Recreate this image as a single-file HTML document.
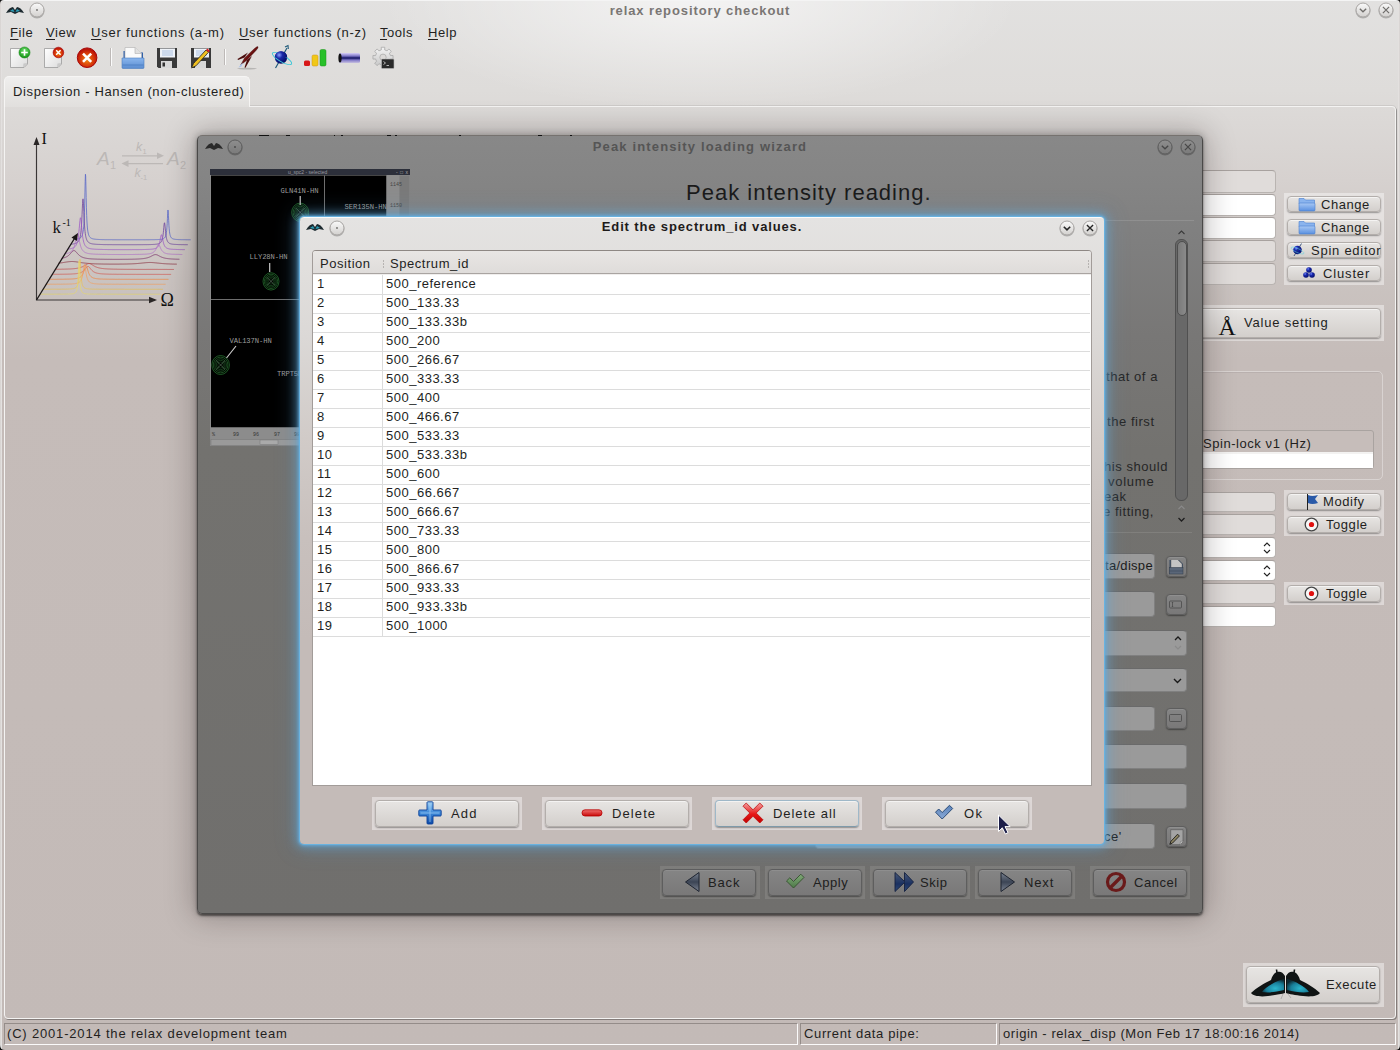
<!DOCTYPE html>
<html><head><meta charset="utf-8">
<style>
*{box-sizing:border-box;margin:0;padding:0}
html,body{width:1400px;height:1050px;overflow:hidden}
body{position:relative;font-family:"Liberation Sans",sans-serif;font-size:13px;letter-spacing:0.55px;color:#231f1e;
background:radial-gradient(ellipse 320px 110px at 700px 0px,rgba(255,255,255,0.6),rgba(255,255,255,0) 100%),linear-gradient(180deg,#e2e1e0 0px,#dedcda 90px,#d6d1cf 180px,#cac3c0 280px,#c5bcb9 360px,#c3bab7 1050px);}
.a{position:absolute}
.t{position:absolute;white-space:nowrap;line-height:15px}
.u{text-decoration:underline;text-underline-offset:2px}
.menu{top:25px}
#tab{left:4px;top:76px;width:246px;height:31px;border:1px solid #f6f5f4;border-bottom:none;border-radius:5px 5px 0 0;
background:linear-gradient(180deg,#efeeed,#e1dfdd)}
#panel{left:4px;top:106px;width:1392px;height:913px;border:1px solid #f4f3f2;border-radius:0 4px 4px 4px;
box-shadow:0 -1px 0 rgba(0,0,0,0.07),1px 1px 0 rgba(0,0,0,0.33)}
.sb{top:1023px;height:22px;border:1px solid #fbfafa;border-top-color:#948c89;border-left-color:#948c89}
.btnbox{position:absolute;background:rgba(255,255,255,0.42)}
.btn{position:absolute;border-radius:4px;border:1px solid #b3aeab;background:linear-gradient(180deg,#e7e5e3,#d3cfcc);
box-shadow:0 1px 1.5px rgba(0,0,0,0.35), inset 0 1px 0 #f4f3f2}
.fld{position:absolute;border-radius:4px;border:1px solid #b9b4b1;border-top-color:#a8a29f;background:#e0dcda}
.fldw{position:absolute;border-radius:4px;border:1px solid #b9b4b1;border-top-color:#a8a29f;background:linear-gradient(90deg,#dcdcdc,#ffffff 40px)}
.circ{position:absolute;border-radius:50%;background:radial-gradient(circle at 50% 30%,#f5f5f5,#d8d6d4 60%,#b0acaa);box-shadow:0 1px 1px rgba(0,0,0,0.35)}
.cell{letter-spacing:0.5px}
/* wizard */
#wiz{left:197px;top:135px;width:1006px;height:779px;border:1px solid #4a4948;border-top-color:#76726f;border-radius:5px;
background:linear-gradient(180deg,#888888 0px,#848484 50px,#7f7f7f 105px,#787776 200px,#73726f 315px,#706f6d 779px);
box-shadow:0 2px 2px rgba(0,0,0,0.5),0 0 6px 1px rgba(0,0,0,0.2),0 0 30px 3px rgba(20,10,10,0.28)}
.wfld{position:absolute;border-radius:4px;border:1px solid #808080;border-top-color:#6a6a6a;background:#9a9a9a}
.wbtnbox{position:absolute;background:rgba(255,255,255,0.1)}
.wbtn{position:absolute;border-radius:4px;border:1px solid #5e5e5e;background:linear-gradient(180deg,#858585,#797878);
box-shadow:0 1px 1.5px rgba(0,0,0,0.4), inset 0 1px 0 #8f8f8f}
.wcirc{position:absolute;border-radius:50%;background:radial-gradient(circle at 50% 30%,#9a9a9a,#858585 60%,#6a6a6a);box-shadow:0 1px 1px rgba(0,0,0,0.35)}
/* dialog */
#dlg{left:300px;top:217px;width:804px;height:627px;border-radius:4px;border-top:1px solid #fbfbfb;
background:linear-gradient(180deg,#e4e3e2 0px,#e1dfdd 50px,#dbd8d6 120px,#d1cbc8 220px,#c8c0bd 320px,#c4bbb8 420px,#c4bbb8 627px);
box-shadow:0 0 0 1px rgba(105,180,225,0.9),0 0 3px 2px rgba(100,175,225,0.75),0 0 10px 4px rgba(95,168,215,0.5),0 0 20px 6px rgba(90,160,210,0.25)}

</style></head><body>
<!-- Title bar -->
<div class="a" style="left:0;top:0;width:2px;height:1050px;background:linear-gradient(90deg,#d4d0ce,#e8e6e5)"></div>
<div class="a" style="left:1398px;top:0;width:2px;height:1050px;background:linear-gradient(90deg,#e8e6e5,#d4d0ce)"></div>
<div class="a" style="left:0;top:0;width:1400px;height:1px;background:#f4f4f4"></div>
<svg class="a" style="left:0;top:0" width="1400" height="1050" viewBox="0 0 1400 1050"><path d="M0 0 H4 Q0 0 0 4 Z M1400 0 H1396 Q1400 0 1400 4 Z M0 1050 V1045 Q0 1050 5 1050 Z M1400 1050 V1045 Q1400 1050 1395 1050 Z" fill="#111"/></svg>
<div class="t" style="left:0;top:3px;width:1400px;text-align:center;color:#7a7674;font-weight:bold;letter-spacing:0.9px">relax repository checkout</div>
<svg class="a" style="left:5px;top:5px" width="20" height="10" viewBox="0 0 20 10"><path d="M1 8 C3 4 6 2 8 2 L10 5 L12 2 C14 2 17 4 19 8 L14 7 L10 9 L6 7 Z" fill="#1d2a30"/><path d="M5 6 L8 4 L9.5 7Z M15 6 L12 4 L10.5 7Z" fill="#2a9fb8"/></svg>
<svg class="a" style="left:26.5px;top:0.0px" width="20" height="20" viewBox="0 0 20 20"><defs><linearGradient id="wb36_10" x1="0" y1="0" x2="0" y2="1"><stop offset="0" stop-color="#fafafa"/><stop offset="1" stop-color="#d2d0ce"/></linearGradient></defs><circle cx="10" cy="10.9" r="7.5" fill="#000" opacity="0.22"/><circle cx="10" cy="10" r="7" fill="url(#wb36_10)" stroke="#a9a6a4" stroke-width="1"/><circle cx="10" cy="10" r="0.9" fill="#6e6c6a"/></svg>
<svg class="a" style="left:1352.5px;top:0.0px" width="20" height="20" viewBox="0 0 20 20"><defs><linearGradient id="wb1362_10" x1="0" y1="0" x2="0" y2="1"><stop offset="0" stop-color="#fafafa"/><stop offset="1" stop-color="#d2d0ce"/></linearGradient></defs><circle cx="10" cy="10.9" r="7.5" fill="#000" opacity="0.22"/><circle cx="10" cy="10" r="7" fill="url(#wb1362_10)" stroke="#a9a6a4" stroke-width="1"/><path d="M6.8 8.7 L10 11.8 L13.2 8.7" fill="none" stroke="#6e6c6a" stroke-width="1.3"/></svg>
<svg class="a" style="left:1375.5px;top:0.0px" width="20" height="20" viewBox="0 0 20 20"><defs><linearGradient id="wb1385_10" x1="0" y1="0" x2="0" y2="1"><stop offset="0" stop-color="#fafafa"/><stop offset="1" stop-color="#d2d0ce"/></linearGradient></defs><circle cx="10" cy="10.9" r="7.5" fill="#000" opacity="0.22"/><circle cx="10" cy="10" r="7" fill="url(#wb1385_10)" stroke="#a9a6a4" stroke-width="1"/><path d="M6.9 6.9 L13.1 13.1 M13.1 6.9 L6.9 13.1" fill="none" stroke="#6e6c6a" stroke-width="1.2"/></svg>

<!-- Menu -->
<div class="t menu" style="left:10px"><span class="u">F</span>ile</div>
<div class="t menu" style="left:46px"><span class="u">V</span>iew</div>
<div class="t menu" style="left:91px;letter-spacing:0.8px"><span class="u">U</span>ser functions (a-m)</div>
<div class="t menu" style="left:239px;letter-spacing:0.72px"><span class="u">U</span>ser functions (n-z)</div>
<div class="t menu" style="left:380px"><span class="u">T</span>ools</div>
<div class="t menu" style="left:428px"><span class="u">H</span>elp</div>

<!-- Toolbar -->
<svg class="a" style="left:0;top:40px" width="420" height="36" viewBox="0 40 420 36">
<defs>
<linearGradient id="pg" x1="0" y1="0" x2="1" y2="1"><stop offset="0" stop-color="#ffffff"/><stop offset="1" stop-color="#dcdcdc"/></linearGradient>
<radialGradient id="gr" cx="0.5" cy="0.35" r="0.6"><stop offset="0" stop-color="#6fe06f"/><stop offset="1" stop-color="#1a9a1a"/></radialGradient>
<radialGradient id="rd" cx="0.5" cy="0.6" r="0.6"><stop offset="0" stop-color="#f08a10"/><stop offset="0.55" stop-color="#d83a0a"/><stop offset="1" stop-color="#b00808"/></radialGradient>
<radialGradient id="bl" cx="0.35" cy="0.3" r="0.75"><stop offset="0" stop-color="#8aa0ff"/><stop offset="0.35" stop-color="#1a2aa8"/><stop offset="1" stop-color="#000a60"/></radialGradient>
<linearGradient id="cyl" x1="0" y1="0" x2="0" y2="1"><stop offset="0" stop-color="#d8d0f8"/><stop offset="0.3" stop-color="#7f78c8"/><stop offset="0.5" stop-color="#101060"/><stop offset="0.7" stop-color="#7f78c8"/><stop offset="1" stop-color="#c8c0e0"/></linearGradient>
<linearGradient id="fold" x1="0" y1="0" x2="0" y2="1"><stop offset="0" stop-color="#8ab6ee"/><stop offset="1" stop-color="#5a8cd0"/></linearGradient>
</defs>
<!-- new doc + -->
<path d="M10.5 48.5 H24 L27.5 52 V64 L24 67.5 H10.5 Z" fill="url(#pg)" stroke="#9a9a9a" stroke-width="0.8"/>
<path d="M23 67.5 L27.5 63 L23.5 63.5 Z" fill="#c8c8c8"/>
<circle cx="24.5" cy="52.5" r="5.5" fill="url(#gr)" stroke="#138813" stroke-width="0.6"/>
<path d="M24.5 49.2 V55.8 M21.2 52.5 H27.8" stroke="#fff" stroke-width="1.6"/>
<!-- close doc x -->
<path d="M44.5 48.5 H58 L61.5 52 V64 L58 67.5 H44.5 Z" fill="url(#pg)" stroke="#9a9a9a" stroke-width="0.8"/>
<path d="M57 67.5 L61.5 63 L57.5 63.5 Z" fill="#c8c8c8"/>
<circle cx="58.4" cy="52.5" r="5.3" fill="url(#rd)" stroke="#a00" stroke-width="0.6"/>
<path d="M56.2 50.3 L60.6 54.7 M60.6 50.3 L56.2 54.7" stroke="#fff" stroke-width="1.5"/>
<!-- big red X -->
<circle cx="87.1" cy="57.7" r="9.8" fill="url(#rd)" stroke="#a80606" stroke-width="1"/>
<path d="M83 53.6 L91.2 61.8 M91.2 53.6 L83 61.8" stroke="#fff" stroke-width="2.6"/>
<!-- separators -->
<path d="M110.5 48 V66" stroke="#bdb9b7" stroke-width="1"/><path d="M111.5 48 V66" stroke="#fbfbfb" stroke-width="1"/>
<path d="M224.5 49 V65" stroke="#bdb9b7" stroke-width="1"/><path d="M225.5 49 V65" stroke="#fbfbfb" stroke-width="1"/>
<!-- open folder -->
<path d="M123.5 51 H130 L132 52.5 H143 V58 H123.5 Z" fill="#2f5fa8"/>
<path d="M125 47.5 H135 L141.5 53.5 V59 H125 Z" fill="#fafafa" stroke="#b8b8b8" stroke-width="0.7"/>
<path d="M135 47.5 V53.5 H141.5" fill="#e0e0e0" stroke="#b0b0b0" stroke-width="0.6"/>
<path d="M122 58 H144 V67.5 Q144 68.5 143 68.5 H123 Q122 68.5 122 67.5 Z" fill="url(#fold)" stroke="#4a7cc0" stroke-width="0.6"/>
<path d="M122.5 65 H143.5" stroke="#4a7cc0" stroke-width="0.8"/>
<!-- floppy -->
<path d="M157 48 H177 V68 H158.5 L157 66.5 Z" fill="#3a3a3a"/>
<rect x="160" y="48.5" width="15" height="9" fill="#eef2f8"/>
<path d="M162 51 H173 M162 53 H173 M162 55 H173" stroke="#8fb0d8" stroke-width="0.7"/>
<rect x="161" y="61" width="11" height="7" fill="#d8d8d8"/><rect x="162.5" y="62.5" width="2.5" height="4" fill="#333"/>
<!-- floppy + pencil -->
<path d="M191 48 H211 V68 H192.5 L191 66.5 Z" fill="#3a3a3a"/>
<rect x="194" y="48.5" width="15" height="9" fill="#eef2f8"/>
<path d="M196 51 H207 M196 53 H207 M196 55 H207" stroke="#8fb0d8" stroke-width="0.7"/>
<rect x="195" y="61" width="11" height="7" fill="#d8d8d8"/>
<path d="M191.5 68 L193.5 63.5 L206 50 L208.5 52.3 L196 65.8 Z" fill="#f0c020" stroke="#222" stroke-width="0.8"/>
<path d="M206 50 L207.5 48.6 L210 51 L208.5 52.3 Z" fill="#d82020"/>
<!-- rocket -->
<defs><linearGradient id="rockg" x1="0" y1="0" x2="1" y2="1"><stop offset="0" stop-color="#c05050"/><stop offset="0.5" stop-color="#6a1010"/><stop offset="1" stop-color="#2a0808"/></linearGradient></defs>
<path d="M241 64.5 L244.5 58 L254.5 48.5 Q257.5 46 258 46.8 Q258.6 47.6 256 50.5 L246.5 60.5 L240.5 65 Z" fill="url(#rockg)" stroke="#3a0a0a" stroke-width="0.4"/>
<path d="M244.5 57.5 L238 60 L237.5 59 L248 52.5 Z" fill="#4a0c0c"/>
<path d="M247 60 L244.5 67.5 L245.5 67.8 L252 56 Z" fill="#4a0c0c"/>
<path d="M240.5 65 L238.5 67.5 L241.5 66.5 L243 62.5 Z" fill="#a8c0f0"/>
<ellipse cx="247" cy="68.6" rx="10" ry="0.9" fill="#000" opacity="0.18"/>
<!-- spin -->
<path d="M275.5 68 L287 48" stroke="#1e5a7a" stroke-width="1.2"/>
<path d="M285 47 L288 45.5 L288.3 49" fill="none" stroke="#1e5a7a" stroke-width="1.1"/>
<circle cx="281" cy="57.5" r="6.2" fill="url(#bl)"/>
<ellipse cx="282" cy="58.5" rx="11" ry="3.2" transform="rotate(30 282 58.5)" fill="none" stroke="#40c8d8" stroke-width="0.9"/>
<circle cx="281" cy="57.5" r="6.2" fill="url(#bl)" clip-path="inset(0 0 50% 0)"/>
<!-- bars -->
<rect x="304" y="60.5" width="6" height="5.5" rx="1.5" fill="#d81818"/>
<rect x="312" y="55" width="6" height="11" rx="1.5" fill="#f0c818" stroke="#d09010" stroke-width="0.5"/>
<rect x="320" y="49.5" width="6" height="16.5" rx="1.5" fill="#28c028" stroke="#189018" stroke-width="0.5"/>
<!-- cylinder -->
<rect x="339" y="53" width="21" height="10" rx="1.5" fill="url(#cyl)"/>
<ellipse cx="340" cy="58" rx="1.6" ry="4.6" fill="#111"/>
<!-- gear terminal -->
<defs><linearGradient id="gearg" x1="0" y1="0" x2="0" y2="1"><stop offset="0" stop-color="#f4f4f4"/><stop offset="1" stop-color="#c4c4c4"/></linearGradient></defs>
<path d="M390.37 55.45 L390.42 55.64 L393.04 55.51 L393.04 59.09 L390.42 58.96 L389.52 61.20 L389.42 61.37 L391.36 63.14 L388.84 65.66 L387.07 63.72 L384.85 64.67 L384.66 64.72 L384.79 67.34 L381.21 67.34 L381.34 64.72 L379.10 63.82 L378.93 63.72 L377.16 65.66 L374.64 63.14 L376.58 61.37 L375.63 59.15 L375.58 58.96 L372.96 59.09 L372.96 55.51 L375.58 55.64 L376.48 53.40 L376.58 53.23 L374.64 51.46 L377.16 48.94 L378.93 50.88 L381.15 49.93 L381.34 49.88 L381.21 47.26 L384.79 47.26 L384.66 49.88 L386.90 50.78 L387.07 50.88 L388.84 48.94 L391.36 51.46 L389.42 53.23 Z" fill="url(#gearg)" stroke="#a8a8a8" stroke-width="0.8"/>
<circle cx="383" cy="57.3" r="3.2" fill="#dcdad8" stroke="#a8a8a8" stroke-width="0.7"/>
<rect x="381.5" y="59" width="12.5" height="9.5" rx="0.8" fill="#2a2a2a" stroke="#bbb" stroke-width="0.6"/>
<path d="M383.5 61.5 L385.5 63 L383.5 64.5 M386.5 65.5 H389" stroke="#eee" stroke-width="0.7" fill="none"/>
</svg>


<!-- Tab + panel -->
<div class="a" id="panel"></div>
<div class="a" id="tab"></div>
<div class="t" style="left:13px;top:84px;letter-spacing:0.65px">Dispersion - Hansen (non-clustered)</div>

<svg class="a" style="left:0;top:0" width="200" height="320" viewBox="0 0 200 320">
<polyline fill="none" stroke="#5565c8" stroke-width="0.95" stroke-opacity="0.8" points="73.93,239.40 74.18,239.38 74.43,239.36 74.68,239.34 74.93,239.32 75.18,239.30 75.43,239.27 75.68,239.25 75.93,239.22 76.18,239.19 76.43,239.15 76.68,239.12 76.93,239.08 77.18,239.03 77.43,238.99 77.68,238.94 77.93,238.88 78.18,238.82 78.43,238.75 78.68,238.67 78.93,238.58 79.18,238.49 79.43,238.38 79.68,238.26 79.93,238.12 80.18,237.96 80.43,237.78 80.68,237.58 80.93,237.34 81.18,237.06 81.43,236.73 81.68,236.33 81.93,235.86 82.18,235.29 82.43,234.59 82.68,233.71 82.93,232.61 83.18,231.19 83.43,229.34 83.68,226.87 83.93,223.53 84.18,218.94 84.43,212.57 84.68,203.89 84.93,192.88 85.18,181.37 85.43,174.24 85.68,176.23 85.93,185.88 86.18,197.60 86.43,207.74 86.68,215.42 86.93,221.00 87.18,225.02 87.43,227.97 87.68,230.16 87.93,231.81 88.18,233.09 88.43,234.09 88.68,234.89 88.93,235.54 89.18,236.06 89.43,236.50 89.68,236.87 89.93,237.18 90.18,237.44 90.43,237.66 90.68,237.86 90.93,238.03 91.18,238.18 91.43,238.31 91.68,238.42 91.93,238.53 92.18,238.62 92.43,238.70 92.68,238.77 92.93,238.84 93.18,238.90 93.43,238.96 93.68,239.01 93.93,239.05 94.18,239.09 94.43,239.13 94.68,239.17 94.93,239.20 95.18,239.23 95.43,239.26 95.68,239.28 95.93,239.31 96.18,239.33 96.43,239.35 96.68,239.37 96.93,239.39 97.18,239.41 97.43,239.42 97.68,239.44 97.93,239.45 98.18,239.46 98.43,239.48 98.68,239.49 98.93,239.50 99.18,239.51 99.43,239.52 99.68,239.53 99.93,239.54 100.18,239.55 100.43,239.56 100.68,239.56 100.93,239.57 101.18,239.58 101.43,239.58 101.68,239.59 101.93,239.60 102.18,239.60 102.43,239.61 102.68,239.61 102.93,239.62 103.18,239.62 103.43,239.63 103.68,239.63 103.93,239.64 104.18,239.64 104.43,239.65 104.68,239.65 104.93,239.65 105.18,239.66 105.43,239.66 105.68,239.66 105.93,239.67 106.18,239.67 106.43,239.67 106.68,239.67 106.93,239.68 107.18,239.68 107.43,239.68 107.68,239.68 107.93,239.69 108.18,239.69 108.43,239.69 108.68,239.69 108.93,239.70 109.18,239.70 109.43,239.70 109.68,239.70 109.93,239.70 110.18,239.71 110.43,239.71 110.68,239.71 110.93,239.71 111.18,239.71 111.43,239.71 111.68,239.71 111.93,239.72 112.18,239.72 112.43,239.72 112.68,239.72 112.93,239.72 113.18,239.72 113.43,239.72 113.68,239.72 113.93,239.73 114.18,239.73 114.43,239.73 114.68,239.73 114.93,239.73 115.18,239.73 115.43,239.73 115.68,239.73 115.93,239.73 116.18,239.73 116.43,239.74 116.68,239.74 116.93,239.74 117.18,239.74 117.43,239.74 117.68,239.74 117.93,239.74 118.18,239.74 118.43,239.74 118.68,239.74 118.93,239.74 119.18,239.74 119.43,239.74 119.68,239.74 119.93,239.74 120.18,239.74 120.43,239.75 120.68,239.75 120.93,239.75 121.18,239.75 121.43,239.75 121.68,239.75 121.93,239.75 122.18,239.75 122.43,239.75 122.68,239.75 122.93,239.75 123.18,239.75 123.43,239.75 123.68,239.75 123.93,239.75 124.18,239.75 124.43,239.75 124.68,239.75 124.93,239.75 125.18,239.75 125.43,239.75 125.68,239.75 125.93,239.75 126.18,239.75 126.43,239.75 126.68,239.75 126.93,239.75 127.18,239.75 127.43,239.75 127.68,239.76 127.93,239.76 128.18,239.76 128.43,239.76 128.68,239.76 128.93,239.76 129.18,239.76 129.43,239.76 129.68,239.76 129.93,239.76 130.18,239.76 130.43,239.76 130.68,239.76 130.93,239.76 131.18,239.76 131.43,239.76 131.68,239.76 131.93,239.76 132.18,239.76 132.43,239.76 132.68,239.76 132.93,239.76 133.18,239.76 133.43,239.76 133.68,239.76 133.93,239.76 134.18,239.76 134.43,239.76 134.68,239.76 134.93,239.76 135.18,239.76 135.43,239.76 135.68,239.76 135.93,239.76 136.18,239.76 136.43,239.76 136.68,239.75 136.93,239.75 137.18,239.75 137.43,239.75 137.68,239.75 137.93,239.75 138.18,239.75 138.43,239.75 138.68,239.75 138.93,239.75 139.18,239.75 139.43,239.75 139.68,239.75 139.93,239.75 140.18,239.75 140.43,239.75 140.68,239.75 140.93,239.75 141.18,239.75 141.43,239.75 141.68,239.75 141.93,239.75 142.18,239.75 142.43,239.75 142.68,239.75 142.93,239.75 143.18,239.74 143.43,239.74 143.68,239.74 143.93,239.74 144.18,239.74 144.43,239.74 144.68,239.74 144.93,239.74 145.18,239.74 145.43,239.74 145.68,239.74 145.93,239.74 146.18,239.73 146.43,239.73 146.68,239.73 146.93,239.73 147.18,239.73 147.43,239.73 147.68,239.73 147.93,239.73 148.18,239.72 148.43,239.72 148.68,239.72 148.93,239.72 149.18,239.72 149.43,239.72 149.68,239.71 149.93,239.71 150.18,239.71 150.43,239.71 150.68,239.71 150.93,239.70 151.18,239.70 151.43,239.70 151.68,239.70 151.93,239.69 152.18,239.69 152.43,239.69 152.68,239.69 152.93,239.68 153.18,239.68 153.43,239.67 153.68,239.67 153.93,239.67 154.18,239.66 154.43,239.66 154.68,239.65 154.93,239.65 155.18,239.64 155.43,239.64 155.68,239.63 155.93,239.62 156.18,239.62 156.43,239.61 156.68,239.60 156.93,239.59 157.18,239.58 157.43,239.57 157.68,239.56 157.93,239.55 158.18,239.54 158.43,239.53 158.68,239.51 158.93,239.50 159.18,239.48 159.43,239.46 159.68,239.44 159.93,239.42 160.18,239.40 160.43,239.37 160.68,239.34 160.93,239.31 161.18,239.28 161.43,239.24 161.68,239.20 161.93,239.15 162.18,239.09 162.43,239.03 162.68,238.96 162.93,238.88 163.18,238.78 163.43,238.67 163.68,238.55 163.93,238.40 164.18,238.22 164.43,238.00 164.68,237.74 164.93,237.42 165.18,237.03 165.43,236.52 165.68,235.88 165.93,235.04 166.18,233.92 166.43,232.40 166.68,230.31 166.93,227.42 167.18,223.47 167.43,218.47 167.68,213.23 167.93,209.99 168.18,210.90 168.43,215.28 168.68,220.61 168.93,225.22 169.18,228.71 169.43,231.25 169.68,233.08 169.93,234.42 170.18,235.41 170.43,236.16 170.68,236.74 170.93,237.20 171.18,237.56 171.43,237.86 171.68,238.10 171.93,238.30 172.18,238.46 172.43,238.60 172.68,238.72 172.93,238.82 173.18,238.91 173.43,238.99 173.68,239.06 173.93,239.12 174.18,239.17 174.43,239.22 174.68,239.26 174.93,239.30 175.18,239.33 175.43,239.36 175.68,239.39 175.93,239.41 176.18,239.43 176.43,239.46 176.68,239.47 176.93,239.49 177.18,239.51 177.43,239.52 177.68,239.54 177.93,239.55 178.18,239.56 178.43,239.57 178.68,239.58 178.93,239.59 179.18,239.60 179.43,239.61 179.68,239.62 179.93,239.62 180.18,239.63 180.43,239.64 180.68,239.64 180.93,239.65 181.18,239.65 181.43,239.66 181.68,239.66 181.93,239.67 182.18,239.67 182.43,239.68 182.68,239.68 182.93,239.69 183.18,239.69 183.43,239.69 183.68,239.70 183.93,239.70 184.18,239.70 184.43,239.70 184.68,239.71 184.93,239.71 185.18,239.71 185.43,239.71 185.68,239.72 185.93,239.72 186.18,239.72 186.43,239.72 186.68,239.73 186.93,239.73 187.18,239.73 187.43,239.73 187.68,239.73 187.93,239.73 188.18,239.74 188.43,239.74 188.68,239.74 188.93,239.74 189.18,239.74 189.43,239.74 189.68,239.74 189.93,239.74 190.18,239.75 190.43,239.75 190.68,239.75"/>
<polyline fill="none" stroke="#6a3f9c" stroke-width="0.95" stroke-opacity="0.8" points="70.81,244.23 71.06,244.21 71.31,244.18 71.56,244.16 71.81,244.13 72.06,244.11 72.31,244.08 72.56,244.04 72.81,244.01 73.06,243.97 73.31,243.93 73.56,243.89 73.81,243.84 74.06,243.79 74.31,243.74 74.56,243.68 74.81,243.62 75.06,243.55 75.31,243.47 75.56,243.38 75.81,243.29 76.06,243.19 76.31,243.07 76.56,242.95 76.81,242.80 77.06,242.64 77.31,242.46 77.56,242.26 77.81,242.03 78.06,241.77 78.31,241.47 78.56,241.12 78.81,240.71 79.06,240.23 79.31,239.67 79.56,239.00 79.81,238.20 80.06,237.23 80.31,236.05 80.56,234.59 80.81,232.78 81.06,230.52 81.31,227.68 81.56,224.13 81.81,219.76 82.06,214.59 82.31,208.91 82.56,203.52 82.81,199.73 83.06,198.83 83.31,201.18 83.56,205.89 83.81,211.55 84.06,217.06 84.31,221.88 84.56,225.86 84.81,229.06 85.06,231.62 85.31,233.66 85.56,235.30 85.81,236.62 86.06,237.70 86.31,238.59 86.56,239.32 86.81,239.94 87.06,240.46 87.31,240.90 87.56,241.28 87.81,241.61 88.06,241.89 88.31,242.14 88.56,242.36 88.81,242.55 89.06,242.72 89.31,242.87 89.56,243.00 89.81,243.12 90.06,243.23 90.31,243.33 90.56,243.42 90.81,243.50 91.06,243.58 91.31,243.64 91.56,243.71 91.81,243.76 92.06,243.81 92.31,243.86 92.56,243.91 92.81,243.95 93.06,243.99 93.31,244.02 93.56,244.06 93.81,244.09 94.06,244.12 94.31,244.14 94.56,244.17 94.81,244.19 95.06,244.21 95.31,244.23 95.56,244.25 95.81,244.27 96.06,244.29 96.31,244.31 96.56,244.32 96.81,244.34 97.06,244.35 97.31,244.37 97.56,244.38 97.81,244.39 98.06,244.40 98.31,244.41 98.56,244.42 98.81,244.43 99.06,244.44 99.31,244.45 99.56,244.46 99.81,244.47 100.06,244.48 100.31,244.48 100.56,244.49 100.81,244.50 101.06,244.50 101.31,244.51 101.56,244.52 101.81,244.52 102.06,244.53 102.31,244.53 102.56,244.54 102.81,244.54 103.06,244.55 103.31,244.55 103.56,244.56 103.81,244.56 104.06,244.57 104.31,244.57 104.56,244.57 104.81,244.58 105.06,244.58 105.31,244.58 105.56,244.59 105.81,244.59 106.06,244.59 106.31,244.60 106.56,244.60 106.81,244.60 107.06,244.60 107.31,244.61 107.56,244.61 107.81,244.61 108.06,244.61 108.31,244.62 108.56,244.62 108.81,244.62 109.06,244.62 109.31,244.63 109.56,244.63 109.81,244.63 110.06,244.63 110.31,244.63 110.56,244.64 110.81,244.64 111.06,244.64 111.31,244.64 111.56,244.64 111.81,244.64 112.06,244.64 112.31,244.65 112.56,244.65 112.81,244.65 113.06,244.65 113.31,244.65 113.56,244.65 113.81,244.65 114.06,244.65 114.31,244.66 114.56,244.66 114.81,244.66 115.06,244.66 115.31,244.66 115.56,244.66 115.81,244.66 116.06,244.66 116.31,244.66 116.56,244.66 116.81,244.67 117.06,244.67 117.31,244.67 117.56,244.67 117.81,244.67 118.06,244.67 118.31,244.67 118.56,244.67 118.81,244.67 119.06,244.67 119.31,244.67 119.56,244.67 119.81,244.67 120.06,244.67 120.31,244.68 120.56,244.68 120.81,244.68 121.06,244.68 121.31,244.68 121.56,244.68 121.81,244.68 122.06,244.68 122.31,244.68 122.56,244.68 122.81,244.68 123.06,244.68 123.31,244.68 123.56,244.68 123.81,244.68 124.06,244.68 124.31,244.68 124.56,244.68 124.81,244.68 125.06,244.68 125.31,244.68 125.56,244.68 125.81,244.68 126.06,244.68 126.31,244.68 126.56,244.68 126.81,244.68 127.06,244.68 127.31,244.68 127.56,244.68 127.81,244.68 128.06,244.68 128.31,244.68 128.56,244.68 128.81,244.68 129.06,244.68 129.31,244.68 129.56,244.68 129.81,244.68 130.06,244.68 130.31,244.68 130.56,244.68 130.81,244.68 131.06,244.68 131.31,244.68 131.56,244.68 131.81,244.68 132.06,244.68 132.31,244.68 132.56,244.68 132.81,244.68 133.06,244.68 133.31,244.68 133.56,244.68 133.81,244.68 134.06,244.68 134.31,244.68 134.56,244.68 134.81,244.68 135.06,244.68 135.31,244.68 135.56,244.68 135.81,244.68 136.06,244.68 136.31,244.68 136.56,244.68 136.81,244.67 137.06,244.67 137.31,244.67 137.56,244.67 137.81,244.67 138.06,244.67 138.31,244.67 138.56,244.67 138.81,244.67 139.06,244.67 139.31,244.67 139.56,244.67 139.81,244.67 140.06,244.66 140.31,244.66 140.56,244.66 140.81,244.66 141.06,244.66 141.31,244.66 141.56,244.66 141.81,244.66 142.06,244.65 142.31,244.65 142.56,244.65 142.81,244.65 143.06,244.65 143.31,244.65 143.56,244.64 143.81,244.64 144.06,244.64 144.31,244.64 144.56,244.64 144.81,244.63 145.06,244.63 145.31,244.63 145.56,244.63 145.81,244.62 146.06,244.62 146.31,244.62 146.56,244.62 146.81,244.61 147.06,244.61 147.31,244.61 147.56,244.60 147.81,244.60 148.06,244.59 148.31,244.59 148.56,244.59 148.81,244.58 149.06,244.58 149.31,244.57 149.56,244.57 149.81,244.56 150.06,244.56 150.31,244.55 150.56,244.54 150.81,244.54 151.06,244.53 151.31,244.52 151.56,244.51 151.81,244.51 152.06,244.50 152.31,244.49 152.56,244.48 152.81,244.47 153.06,244.45 153.31,244.44 153.56,244.43 153.81,244.41 154.06,244.40 154.31,244.38 154.56,244.37 154.81,244.35 155.06,244.33 155.31,244.30 155.56,244.28 155.81,244.25 156.06,244.23 156.31,244.20 156.56,244.16 156.81,244.12 157.06,244.08 157.31,244.04 157.56,243.99 157.81,243.94 158.06,243.88 158.31,243.81 158.56,243.73 158.81,243.65 159.06,243.55 159.31,243.44 159.56,243.31 159.81,243.17 160.06,243.00 160.31,242.81 160.56,242.58 160.81,242.31 161.06,241.99 161.31,241.61 161.56,241.14 161.81,240.58 162.06,239.88 162.31,239.02 162.56,237.93 162.81,236.57 163.06,234.88 163.31,232.79 163.56,230.32 163.81,227.60 164.06,225.02 164.31,223.21 164.56,222.78 164.81,223.90 165.06,226.16 165.31,228.86 165.56,231.50 165.81,233.80 166.06,235.71 166.31,237.24 166.56,238.46 166.81,239.44 167.06,240.22 167.31,240.85 167.56,241.37 167.81,241.80 168.06,242.15 168.31,242.44 168.56,242.69 168.81,242.90 169.06,243.08 169.31,243.24 169.56,243.38 169.81,243.49 170.06,243.60 170.31,243.69 170.56,243.77 170.81,243.84 171.06,243.91 171.31,243.97 171.56,244.02 171.81,244.07 172.06,244.11 172.31,244.15 172.56,244.18 172.81,244.21 173.06,244.24 173.31,244.27 173.56,244.30 173.81,244.32 174.06,244.34 174.31,244.36 174.56,244.38 174.81,244.40 175.06,244.41 175.31,244.43 175.56,244.44 175.81,244.45 176.06,244.47 176.31,244.48 176.56,244.49 176.81,244.50 177.06,244.51 177.31,244.52 177.56,244.53 177.81,244.53 178.06,244.54 178.31,244.55 178.56,244.55 178.81,244.56 179.06,244.57 179.31,244.57 179.56,244.58 179.81,244.58 180.06,244.59 180.31,244.59 180.56,244.60 180.81,244.60 181.06,244.61 181.31,244.61 181.56,244.61 181.81,244.62 182.06,244.62 182.31,244.63 182.56,244.63 182.81,244.63 183.06,244.63 183.31,244.64 183.56,244.64 183.81,244.64 184.06,244.65 184.31,244.65 184.56,244.65 184.81,244.65 185.06,244.65 185.31,244.66 185.56,244.66 185.81,244.66 186.06,244.66 186.31,244.66 186.56,244.67 186.81,244.67 187.06,244.67 187.31,244.67 187.56,244.67 187.81,244.67"/>
<polyline fill="none" stroke="#9a55c5" stroke-width="0.95" stroke-opacity="0.8" points="67.69,249.07 67.94,249.05 68.19,249.02 68.44,249.00 68.69,248.97 68.94,248.94 69.19,248.90 69.44,248.87 69.69,248.83 69.94,248.79 70.19,248.75 70.44,248.70 70.69,248.65 70.94,248.60 71.19,248.54 71.44,248.48 71.69,248.41 71.94,248.34 72.19,248.26 72.44,248.17 72.69,248.08 72.94,247.98 73.19,247.86 73.44,247.74 73.69,247.60 73.94,247.45 74.19,247.29 74.44,247.10 74.69,246.89 74.94,246.66 75.19,246.40 75.44,246.10 75.69,245.76 75.94,245.38 76.19,244.94 76.44,244.44 76.69,243.86 76.94,243.18 77.19,242.39 77.44,241.47 77.69,240.39 77.94,239.11 78.19,237.61 78.44,235.85 78.69,233.79 78.94,231.43 79.19,228.78 79.44,225.94 79.69,223.09 79.94,220.53 80.19,218.62 80.44,217.73 80.69,218.04 80.94,219.49 81.19,221.78 81.44,224.54 81.69,227.41 81.94,230.17 82.19,232.68 82.44,234.88 82.69,236.78 82.94,238.41 83.19,239.79 83.44,240.96 83.69,241.96 83.94,242.81 84.19,243.54 84.44,244.16 84.69,244.70 84.94,245.17 85.19,245.58 85.44,245.94 85.69,246.25 85.94,246.53 86.19,246.78 86.44,247.00 86.69,247.20 86.94,247.37 87.19,247.53 87.44,247.67 87.69,247.80 87.94,247.92 88.19,248.03 88.44,248.13 88.69,248.22 88.94,248.30 89.19,248.37 89.44,248.44 89.69,248.51 89.94,248.57 90.19,248.62 90.44,248.67 90.69,248.72 90.94,248.77 91.19,248.81 91.44,248.85 91.69,248.88 91.94,248.92 92.19,248.95 92.44,248.98 92.69,249.01 92.94,249.03 93.19,249.06 93.44,249.08 93.69,249.10 93.94,249.13 94.19,249.15 94.44,249.16 94.69,249.18 94.94,249.20 95.19,249.22 95.44,249.23 95.69,249.25 95.94,249.26 96.19,249.27 96.44,249.29 96.69,249.30 96.94,249.31 97.19,249.32 97.44,249.33 97.69,249.34 97.94,249.35 98.19,249.36 98.44,249.37 98.69,249.38 98.94,249.39 99.19,249.39 99.44,249.40 99.69,249.41 99.94,249.42 100.19,249.42 100.44,249.43 100.69,249.43 100.94,249.44 101.19,249.45 101.44,249.45 101.69,249.46 101.94,249.46 102.19,249.47 102.44,249.47 102.69,249.48 102.94,249.48 103.19,249.49 103.44,249.49 103.69,249.49 103.94,249.50 104.19,249.50 104.44,249.51 104.69,249.51 104.94,249.51 105.19,249.52 105.44,249.52 105.69,249.52 105.94,249.52 106.19,249.53 106.44,249.53 106.69,249.53 106.94,249.54 107.19,249.54 107.44,249.54 107.69,249.54 107.94,249.55 108.19,249.55 108.44,249.55 108.69,249.55 108.94,249.55 109.19,249.56 109.44,249.56 109.69,249.56 109.94,249.56 110.19,249.56 110.44,249.57 110.69,249.57 110.94,249.57 111.19,249.57 111.44,249.57 111.69,249.57 111.94,249.58 112.19,249.58 112.44,249.58 112.69,249.58 112.94,249.58 113.19,249.58 113.44,249.58 113.69,249.58 113.94,249.59 114.19,249.59 114.44,249.59 114.69,249.59 114.94,249.59 115.19,249.59 115.44,249.59 115.69,249.59 115.94,249.59 116.19,249.60 116.44,249.60 116.69,249.60 116.94,249.60 117.19,249.60 117.44,249.60 117.69,249.60 117.94,249.60 118.19,249.60 118.44,249.60 118.69,249.60 118.94,249.60 119.19,249.60 119.44,249.60 119.69,249.60 119.94,249.61 120.19,249.61 120.44,249.61 120.69,249.61 120.94,249.61 121.19,249.61 121.44,249.61 121.69,249.61 121.94,249.61 122.19,249.61 122.44,249.61 122.69,249.61 122.94,249.61 123.19,249.61 123.44,249.61 123.69,249.61 123.94,249.61 124.19,249.61 124.44,249.61 124.69,249.61 124.94,249.61 125.19,249.61 125.44,249.61 125.69,249.61 125.94,249.61 126.19,249.61 126.44,249.61 126.69,249.61 126.94,249.61 127.19,249.61 127.44,249.61 127.69,249.61 127.94,249.61 128.19,249.61 128.44,249.61 128.69,249.61 128.94,249.61 129.19,249.61 129.44,249.61 129.69,249.61 129.94,249.61 130.19,249.61 130.44,249.61 130.69,249.61 130.94,249.61 131.19,249.61 131.44,249.61 131.69,249.61 131.94,249.61 132.19,249.60 132.44,249.60 132.69,249.60 132.94,249.60 133.19,249.60 133.44,249.60 133.69,249.60 133.94,249.60 134.19,249.60 134.44,249.60 134.69,249.60 134.94,249.60 135.19,249.60 135.44,249.59 135.69,249.59 135.94,249.59 136.19,249.59 136.44,249.59 136.69,249.59 136.94,249.59 137.19,249.59 137.44,249.58 137.69,249.58 137.94,249.58 138.19,249.58 138.44,249.58 138.69,249.58 138.94,249.57 139.19,249.57 139.44,249.57 139.69,249.57 139.94,249.57 140.19,249.56 140.44,249.56 140.69,249.56 140.94,249.56 141.19,249.55 141.44,249.55 141.69,249.55 141.94,249.55 142.19,249.54 142.44,249.54 142.69,249.54 142.94,249.53 143.19,249.53 143.44,249.53 143.69,249.52 143.94,249.52 144.19,249.51 144.44,249.51 144.69,249.50 144.94,249.50 145.19,249.49 145.44,249.49 145.69,249.48 145.94,249.48 146.19,249.47 146.44,249.46 146.69,249.46 146.94,249.45 147.19,249.44 147.44,249.44 147.69,249.43 147.94,249.42 148.19,249.41 148.44,249.40 148.69,249.39 148.94,249.38 149.19,249.36 149.44,249.35 149.69,249.34 149.94,249.32 150.19,249.31 150.44,249.29 150.69,249.27 150.94,249.26 151.19,249.24 151.44,249.21 151.69,249.19 151.94,249.17 152.19,249.14 152.44,249.11 152.69,249.08 152.94,249.05 153.19,249.01 153.44,248.97 153.69,248.92 153.94,248.88 154.19,248.82 154.44,248.77 154.69,248.70 154.94,248.63 155.19,248.55 155.44,248.47 155.69,248.37 155.94,248.26 156.19,248.14 156.44,248.00 156.69,247.84 156.94,247.66 157.19,247.46 157.44,247.22 157.69,246.95 157.94,246.63 158.19,246.26 158.44,245.83 158.69,245.32 158.94,244.72 159.19,244.02 159.44,243.19 159.69,242.23 159.94,241.12 160.19,239.88 160.44,238.55 160.69,237.22 160.94,236.01 161.19,235.12 161.44,234.70 161.69,234.85 161.94,235.53 162.19,236.60 162.44,237.89 162.69,239.24 162.94,240.53 163.19,241.71 163.44,242.74 163.69,243.63 163.94,244.40 164.19,245.04 164.44,245.59 164.69,246.06 164.94,246.46 165.19,246.80 165.44,247.09 165.69,247.35 165.94,247.57 166.19,247.76 166.44,247.93 166.69,248.07 166.94,248.21 167.19,248.32 167.44,248.42 167.69,248.52 167.94,248.60 168.19,248.67 168.44,248.74 168.69,248.80 168.94,248.86 169.19,248.91 169.44,248.95 169.69,249.00 169.94,249.03 170.19,249.07 170.44,249.10 170.69,249.13 170.94,249.16 171.19,249.19 171.44,249.21 171.69,249.23 171.94,249.25 172.19,249.27 172.44,249.29 172.69,249.31 172.94,249.33 173.19,249.34 173.44,249.35 173.69,249.37 173.94,249.38 174.19,249.39 174.44,249.40 174.69,249.41 174.94,249.42 175.19,249.43 175.44,249.44 175.69,249.45 175.94,249.46 176.19,249.47 176.44,249.47 176.69,249.48 176.94,249.49 177.19,249.49 177.44,249.50 177.69,249.51 177.94,249.51 178.19,249.52 178.44,249.52 178.69,249.53 178.94,249.53 179.19,249.54 179.44,249.54 179.69,249.54 179.94,249.55 180.19,249.55 180.44,249.56 180.69,249.56 180.94,249.56 181.19,249.57 181.44,249.57 181.69,249.57 181.94,249.57 182.19,249.58 182.44,249.58 182.69,249.58 182.94,249.59 183.19,249.59 183.44,249.59 183.69,249.59 183.94,249.59 184.19,249.60 184.44,249.60 184.69,249.60 184.94,249.60"/>
<polyline fill="none" stroke="#b070c8" stroke-width="0.95" stroke-opacity="0.8" points="64.57,253.82 64.82,253.79 65.07,253.76 65.32,253.73 65.57,253.69 65.82,253.65 66.07,253.61 66.32,253.56 66.57,253.52 66.82,253.47 67.07,253.41 67.32,253.35 67.57,253.29 67.82,253.23 68.07,253.16 68.32,253.08 68.57,253.00 68.82,252.91 69.07,252.82 69.32,252.71 69.57,252.60 69.82,252.48 70.07,252.35 70.32,252.21 70.57,252.05 70.82,251.88 71.07,251.69 71.32,251.48 71.57,251.25 71.82,251.00 72.07,250.72 72.32,250.41 72.57,250.07 72.82,249.69 73.07,249.26 73.32,248.78 73.57,248.24 73.82,247.65 74.07,246.97 74.32,246.22 74.57,245.39 74.82,244.45 75.07,243.43 75.32,242.31 75.57,241.10 75.82,239.82 76.07,238.51 76.32,237.22 76.57,236.02 76.82,234.98 77.07,234.20 77.32,233.74 77.57,233.65 77.82,233.95 78.07,234.60 78.32,235.54 78.57,236.68 78.82,237.94 79.07,239.25 79.32,240.55 79.57,241.79 79.82,242.95 80.07,244.02 80.32,244.99 80.57,245.87 80.82,246.66 81.07,247.36 81.32,247.99 81.57,248.55 81.82,249.05 82.07,249.50 82.32,249.90 82.57,250.26 82.82,250.59 83.07,250.88 83.32,251.14 83.57,251.38 83.82,251.60 84.07,251.79 84.32,251.97 84.57,252.13 84.82,252.28 85.07,252.42 85.32,252.55 85.57,252.66 85.82,252.77 86.07,252.87 86.32,252.96 86.57,253.04 86.82,253.12 87.07,253.19 87.32,253.26 87.57,253.32 87.82,253.38 88.07,253.44 88.32,253.49 88.57,253.54 88.82,253.58 89.07,253.62 89.32,253.66 89.57,253.70 89.82,253.74 90.07,253.77 90.32,253.80 90.57,253.83 90.82,253.86 91.07,253.89 91.32,253.91 91.57,253.94 91.82,253.96 92.07,253.98 92.32,254.01 92.57,254.03 92.82,254.04 93.07,254.06 93.32,254.08 93.57,254.10 93.82,254.11 94.07,254.13 94.32,254.14 94.57,254.15 94.82,254.17 95.07,254.18 95.32,254.19 95.57,254.20 95.82,254.22 96.07,254.23 96.32,254.24 96.57,254.25 96.82,254.26 97.07,254.27 97.32,254.27 97.57,254.28 97.82,254.29 98.07,254.30 98.32,254.31 98.57,254.31 98.82,254.32 99.07,254.33 99.32,254.33 99.57,254.34 99.82,254.35 100.07,254.35 100.32,254.36 100.57,254.36 100.82,254.37 101.07,254.37 101.32,254.38 101.57,254.38 101.82,254.39 102.07,254.39 102.32,254.40 102.57,254.40 102.82,254.41 103.07,254.41 103.32,254.41 103.57,254.42 103.82,254.42 104.07,254.42 104.32,254.43 104.57,254.43 104.82,254.43 105.07,254.44 105.32,254.44 105.57,254.44 105.82,254.45 106.07,254.45 106.32,254.45 106.57,254.45 106.82,254.46 107.07,254.46 107.32,254.46 107.57,254.46 107.82,254.47 108.07,254.47 108.32,254.47 108.57,254.47 108.82,254.47 109.07,254.48 109.32,254.48 109.57,254.48 109.82,254.48 110.07,254.48 110.32,254.49 110.57,254.49 110.82,254.49 111.07,254.49 111.32,254.49 111.57,254.49 111.82,254.49 112.07,254.50 112.32,254.50 112.57,254.50 112.82,254.50 113.07,254.50 113.32,254.50 113.57,254.50 113.82,254.50 114.07,254.50 114.32,254.51 114.57,254.51 114.82,254.51 115.07,254.51 115.32,254.51 115.57,254.51 115.82,254.51 116.07,254.51 116.32,254.51 116.57,254.51 116.82,254.51 117.07,254.51 117.32,254.51 117.57,254.52 117.82,254.52 118.07,254.52 118.32,254.52 118.57,254.52 118.82,254.52 119.07,254.52 119.32,254.52 119.57,254.52 119.82,254.52 120.07,254.52 120.32,254.52 120.57,254.52 120.82,254.52 121.07,254.52 121.32,254.52 121.57,254.52 121.82,254.52 122.07,254.52 122.32,254.52 122.57,254.52 122.82,254.52 123.07,254.52 123.32,254.52 123.57,254.52 123.82,254.52 124.07,254.52 124.32,254.52 124.57,254.52 124.82,254.52 125.07,254.52 125.32,254.52 125.57,254.52 125.82,254.52 126.07,254.52 126.32,254.52 126.57,254.51 126.82,254.51 127.07,254.51 127.32,254.51 127.57,254.51 127.82,254.51 128.07,254.51 128.32,254.51 128.57,254.51 128.82,254.51 129.07,254.51 129.32,254.51 129.57,254.50 129.82,254.50 130.07,254.50 130.32,254.50 130.57,254.50 130.82,254.50 131.07,254.50 131.32,254.50 131.57,254.49 131.82,254.49 132.07,254.49 132.32,254.49 132.57,254.49 132.82,254.49 133.07,254.48 133.32,254.48 133.57,254.48 133.82,254.48 134.07,254.48 134.32,254.47 134.57,254.47 134.82,254.47 135.07,254.47 135.32,254.46 135.57,254.46 135.82,254.46 136.07,254.46 136.32,254.45 136.57,254.45 136.82,254.45 137.07,254.44 137.32,254.44 137.57,254.43 137.82,254.43 138.07,254.43 138.32,254.42 138.57,254.42 138.82,254.41 139.07,254.41 139.32,254.40 139.57,254.40 139.82,254.39 140.07,254.39 140.32,254.38 140.57,254.38 140.82,254.37 141.07,254.36 141.32,254.36 141.57,254.35 141.82,254.34 142.07,254.33 142.32,254.33 142.57,254.32 142.82,254.31 143.07,254.30 143.32,254.29 143.57,254.28 143.82,254.27 144.07,254.26 144.32,254.24 144.57,254.23 144.82,254.22 145.07,254.20 145.32,254.19 145.57,254.17 145.82,254.15 146.07,254.14 146.32,254.12 146.57,254.10 146.82,254.08 147.07,254.05 147.32,254.03 147.57,254.01 147.82,253.98 148.07,253.95 148.32,253.92 148.57,253.89 148.82,253.85 149.07,253.81 149.32,253.77 149.57,253.73 149.82,253.68 150.07,253.63 150.32,253.57 150.57,253.51 150.82,253.45 151.07,253.38 151.32,253.30 151.57,253.22 151.82,253.13 152.07,253.03 152.32,252.92 152.57,252.80 152.82,252.67 153.07,252.52 153.32,252.36 153.57,252.19 153.82,251.99 154.07,251.77 154.32,251.53 154.57,251.26 154.82,250.96 155.07,250.63 155.32,250.26 155.57,249.85 155.82,249.41 156.07,248.92 156.32,248.40 156.57,247.85 156.82,247.27 157.07,246.70 157.32,246.13 157.57,245.62 157.82,245.18 158.07,244.86 158.32,244.67 158.57,244.63 158.82,244.76 159.07,245.03 159.32,245.42 159.57,245.90 159.82,246.45 160.07,247.02 160.32,247.60 160.57,248.16 160.82,248.70 161.07,249.20 161.32,249.67 161.57,250.09 161.82,250.47 162.07,250.82 162.32,251.14 162.57,251.42 162.82,251.67 163.07,251.90 163.32,252.11 163.57,252.29 163.82,252.46 164.07,252.61 164.32,252.75 164.57,252.88 164.82,252.99 165.07,253.09 165.32,253.19 165.57,253.28 165.82,253.36 166.07,253.43 166.32,253.50 166.57,253.56 166.82,253.61 167.07,253.67 167.32,253.72 167.57,253.76 167.82,253.80 168.07,253.84 168.32,253.88 168.57,253.92 168.82,253.95 169.07,253.98 169.32,254.01 169.57,254.03 169.82,254.06 170.07,254.08 170.32,254.10 170.57,254.12 170.82,254.14 171.07,254.16 171.32,254.18 171.57,254.20 171.82,254.21 172.07,254.23 172.32,254.24 172.57,254.25 172.82,254.27 173.07,254.28 173.32,254.29 173.57,254.30 173.82,254.31 174.07,254.32 174.32,254.33 174.57,254.34 174.82,254.35 175.07,254.36 175.32,254.37 175.57,254.37 175.82,254.38 176.07,254.39 176.32,254.39 176.57,254.40 176.82,254.41 177.07,254.41 177.32,254.42 177.57,254.42 177.82,254.43 178.07,254.44 178.32,254.44 178.57,254.45 178.82,254.45 179.07,254.45 179.32,254.46 179.57,254.46 179.82,254.47 180.07,254.47 180.32,254.47 180.57,254.48 180.82,254.48 181.07,254.49 181.32,254.49 181.57,254.49 181.82,254.49 182.07,254.50 182.32,254.50"/>
<polyline fill="none" stroke="#7a3068" stroke-width="0.95" stroke-opacity="0.8" points="61.45,258.35 61.70,258.30 61.95,258.26 62.20,258.21 62.45,258.16 62.70,258.11 62.95,258.05 63.20,257.99 63.45,257.93 63.70,257.86 63.95,257.79 64.20,257.72 64.45,257.64 64.70,257.56 64.95,257.47 65.20,257.38 65.45,257.28 65.70,257.18 65.95,257.07 66.20,256.96 66.45,256.83 66.70,256.70 66.95,256.56 67.20,256.42 67.45,256.26 67.70,256.10 67.95,255.92 68.20,255.74 68.45,255.54 68.70,255.34 68.95,255.12 69.20,254.89 69.45,254.65 69.70,254.40 69.95,254.14 70.20,253.87 70.45,253.59 70.70,253.30 70.95,253.01 71.20,252.72 71.45,252.43 71.70,252.14 71.95,251.87 72.20,251.60 72.45,251.36 72.70,251.14 72.95,250.95 73.20,250.80 73.45,250.68 73.70,250.61 73.95,250.57 74.20,250.59 74.45,250.65 74.70,250.75 74.95,250.89 75.20,251.06 75.45,251.27 75.70,251.51 75.95,251.76 76.20,252.03 76.45,252.32 76.70,252.61 76.95,252.90 77.20,253.19 77.45,253.48 77.70,253.76 77.95,254.03 78.20,254.30 78.45,254.55 78.70,254.79 78.95,255.03 79.20,255.25 79.45,255.46 79.70,255.66 79.95,255.85 80.20,256.02 80.45,256.19 80.70,256.35 80.95,256.50 81.20,256.64 81.45,256.77 81.70,256.90 81.95,257.02 82.20,257.13 82.45,257.23 82.70,257.33 82.95,257.43 83.20,257.51 83.45,257.60 83.70,257.68 83.95,257.75 84.20,257.82 84.45,257.89 84.70,257.95 84.95,258.01 85.20,258.07 85.45,258.12 85.70,258.17 85.95,258.22 86.20,258.27 86.45,258.31 86.70,258.35 86.95,258.39 87.20,258.43 87.45,258.47 87.70,258.50 87.95,258.54 88.20,258.57 88.45,258.60 88.70,258.63 88.95,258.65 89.20,258.68 89.45,258.71 89.70,258.73 89.95,258.75 90.20,258.78 90.45,258.80 90.70,258.82 90.95,258.84 91.20,258.86 91.45,258.87 91.70,258.89 91.95,258.91 92.20,258.92 92.45,258.94 92.70,258.95 92.95,258.97 93.20,258.98 93.45,259.00 93.70,259.01 93.95,259.02 94.20,259.03 94.45,259.04 94.70,259.06 94.95,259.07 95.20,259.08 95.45,259.09 95.70,259.10 95.95,259.11 96.20,259.11 96.45,259.12 96.70,259.13 96.95,259.14 97.20,259.15 97.45,259.16 97.70,259.16 97.95,259.17 98.20,259.18 98.45,259.18 98.70,259.19 98.95,259.20 99.20,259.20 99.45,259.21 99.70,259.21 99.95,259.22 100.20,259.23 100.45,259.23 100.70,259.24 100.95,259.24 101.20,259.25 101.45,259.25 101.70,259.25 101.95,259.26 102.20,259.26 102.45,259.27 102.70,259.27 102.95,259.27 103.20,259.28 103.45,259.28 103.70,259.29 103.95,259.29 104.20,259.29 104.45,259.30 104.70,259.30 104.95,259.30 105.20,259.30 105.45,259.31 105.70,259.31 105.95,259.31 106.20,259.32 106.45,259.32 106.70,259.32 106.95,259.32 107.20,259.32 107.45,259.33 107.70,259.33 107.95,259.33 108.20,259.33 108.45,259.33 108.70,259.34 108.95,259.34 109.20,259.34 109.45,259.34 109.70,259.34 109.95,259.34 110.20,259.35 110.45,259.35 110.70,259.35 110.95,259.35 111.20,259.35 111.45,259.35 111.70,259.35 111.95,259.35 112.20,259.35 112.45,259.36 112.70,259.36 112.95,259.36 113.20,259.36 113.45,259.36 113.70,259.36 113.95,259.36 114.20,259.36 114.45,259.36 114.70,259.36 114.95,259.36 115.20,259.36 115.45,259.36 115.70,259.36 115.95,259.36 116.20,259.36 116.45,259.36 116.70,259.36 116.95,259.36 117.20,259.36 117.45,259.36 117.70,259.36 117.95,259.36 118.20,259.36 118.45,259.36 118.70,259.36 118.95,259.36 119.20,259.36 119.45,259.36 119.70,259.36 119.95,259.36 120.20,259.36 120.45,259.35 120.70,259.35 120.95,259.35 121.20,259.35 121.45,259.35 121.70,259.35 121.95,259.35 122.20,259.35 122.45,259.35 122.70,259.34 122.95,259.34 123.20,259.34 123.45,259.34 123.70,259.34 123.95,259.34 124.20,259.33 124.45,259.33 124.70,259.33 124.95,259.33 125.20,259.33 125.45,259.32 125.70,259.32 125.95,259.32 126.20,259.32 126.45,259.31 126.70,259.31 126.95,259.31 127.20,259.31 127.45,259.30 127.70,259.30 127.95,259.30 128.20,259.29 128.45,259.29 128.70,259.29 128.95,259.28 129.20,259.28 129.45,259.28 129.70,259.27 129.95,259.27 130.20,259.26 130.45,259.26 130.70,259.25 130.95,259.25 131.20,259.24 131.45,259.24 131.70,259.23 131.95,259.23 132.20,259.22 132.45,259.22 132.70,259.21 132.95,259.21 133.20,259.20 133.45,259.19 133.70,259.19 133.95,259.18 134.20,259.17 134.45,259.16 134.70,259.16 134.95,259.15 135.20,259.14 135.45,259.13 135.70,259.12 135.95,259.11 136.20,259.10 136.45,259.09 136.70,259.08 136.95,259.07 137.20,259.06 137.45,259.05 137.70,259.03 137.95,259.02 138.20,259.01 138.45,259.00 138.70,258.98 138.95,258.97 139.20,258.95 139.45,258.93 139.70,258.92 139.95,258.90 140.20,258.88 140.45,258.86 140.70,258.84 140.95,258.82 141.20,258.80 141.45,258.78 141.70,258.76 141.95,258.73 142.20,258.71 142.45,258.68 142.70,258.65 142.95,258.62 143.20,258.59 143.45,258.56 143.70,258.53 143.95,258.49 144.20,258.45 144.45,258.42 144.70,258.38 144.95,258.33 145.20,258.29 145.45,258.24 145.70,258.19 145.95,258.14 146.20,258.09 146.45,258.03 146.70,257.97 146.95,257.91 147.20,257.84 147.45,257.77 147.70,257.70 147.95,257.62 148.20,257.54 148.45,257.46 148.70,257.37 148.95,257.28 149.20,257.18 149.45,257.08 149.70,256.98 149.95,256.87 150.20,256.75 150.45,256.63 150.70,256.51 150.95,256.39 151.20,256.26 151.45,256.13 151.70,255.99 151.95,255.86 152.20,255.72 152.45,255.59 152.70,255.46 152.95,255.33 153.20,255.20 153.45,255.09 153.70,254.98 153.95,254.88 154.20,254.79 154.45,254.71 154.70,254.65 154.95,254.61 155.20,254.58 155.45,254.57 155.70,254.57 155.95,254.59 156.20,254.63 156.45,254.69 156.70,254.76 156.95,254.84 157.20,254.94 157.45,255.05 157.70,255.16 157.95,255.28 158.20,255.41 158.45,255.54 158.70,255.68 158.95,255.81 159.20,255.95 159.45,256.08 159.70,256.21 159.95,256.35 160.20,256.47 160.45,256.60 160.70,256.72 160.95,256.83 161.20,256.94 161.45,257.05 161.70,257.15 161.95,257.25 162.20,257.35 162.45,257.44 162.70,257.52 162.95,257.61 163.20,257.68 163.45,257.76 163.70,257.83 163.95,257.90 164.20,257.96 164.45,258.02 164.70,258.08 164.95,258.14 165.20,258.19 165.45,258.24 165.70,258.29 165.95,258.33 166.20,258.38 166.45,258.42 166.70,258.46 166.95,258.50 167.20,258.53 167.45,258.57 167.70,258.60 167.95,258.63 168.20,258.66 168.45,258.69 168.70,258.72 168.95,258.75 169.20,258.77 169.45,258.79 169.70,258.82 169.95,258.84 170.20,258.86 170.45,258.88 170.70,258.90 170.95,258.92 171.20,258.94 171.45,258.96 171.70,258.97 171.95,258.99 172.20,259.01 172.45,259.02 172.70,259.03 172.95,259.05 173.20,259.06 173.45,259.07 173.70,259.09 173.95,259.10 174.20,259.11 174.45,259.12 174.70,259.13 174.95,259.14 175.20,259.15 175.45,259.16 175.70,259.17 175.95,259.18 176.20,259.19 176.45,259.20 176.70,259.21 176.95,259.22 177.20,259.22 177.45,259.23 177.70,259.24 177.95,259.25 178.20,259.25 178.45,259.26 178.70,259.27 178.95,259.27 179.20,259.28 179.45,259.28"/>
<polyline fill="none" stroke="#8a3040" stroke-width="0.95" stroke-opacity="0.8" points="58.33,263.21 58.58,263.18 58.83,263.15 59.08,263.13 59.33,263.10 59.58,263.07 59.83,263.04 60.08,263.00 60.33,262.97 60.58,262.94 60.83,262.91 61.08,262.87 61.33,262.84 61.58,262.80 61.83,262.77 62.08,262.73 62.33,262.69 62.58,262.66 62.83,262.62 63.08,262.58 63.33,262.54 63.58,262.50 63.83,262.46 64.08,262.42 64.33,262.38 64.58,262.34 64.83,262.30 65.08,262.26 65.33,262.22 65.58,262.18 65.83,262.14 66.08,262.10 66.33,262.06 66.58,262.02 66.83,261.98 67.08,261.94 67.33,261.90 67.58,261.87 67.83,261.83 68.08,261.80 68.33,261.76 68.58,261.73 68.83,261.70 69.08,261.67 69.33,261.65 69.58,261.62 69.83,261.60 70.08,261.58 70.33,261.56 70.58,261.55 70.83,261.53 71.08,261.52 71.33,261.51 71.58,261.51 71.83,261.50 72.08,261.50 72.33,261.51 72.58,261.51 72.83,261.52 73.08,261.53 73.33,261.54 73.58,261.55 73.83,261.57 74.08,261.59 74.33,261.61 74.58,261.63 74.83,261.66 75.08,261.69 75.33,261.71 75.58,261.74 75.83,261.78 76.08,261.81 76.33,261.84 76.58,261.88 76.83,261.92 77.08,261.95 77.33,261.99 77.58,262.03 77.83,262.07 78.08,262.11 78.33,262.15 78.58,262.19 78.83,262.23 79.08,262.27 79.33,262.31 79.58,262.35 79.83,262.39 80.08,262.43 80.33,262.47 80.58,262.51 80.83,262.55 81.08,262.58 81.33,262.62 81.58,262.66 81.83,262.70 82.08,262.73 82.33,262.77 82.58,262.80 82.83,262.84 83.08,262.87 83.33,262.90 83.58,262.93 83.83,262.97 84.08,263.00 84.33,263.03 84.58,263.06 84.83,263.08 85.08,263.11 85.33,263.14 85.58,263.17 85.83,263.19 86.08,263.22 86.33,263.25 86.58,263.27 86.83,263.29 87.08,263.32 87.33,263.34 87.58,263.36 87.83,263.38 88.08,263.40 88.33,263.43 88.58,263.45 88.83,263.47 89.08,263.48 89.33,263.50 89.58,263.52 89.83,263.54 90.08,263.56 90.33,263.57 90.58,263.59 90.83,263.60 91.08,263.62 91.33,263.64 91.58,263.65 91.83,263.66 92.08,263.68 92.33,263.69 92.58,263.71 92.83,263.72 93.08,263.73 93.33,263.74 93.58,263.76 93.83,263.77 94.08,263.78 94.33,263.79 94.58,263.80 94.83,263.81 95.08,263.82 95.33,263.83 95.58,263.84 95.83,263.85 96.08,263.86 96.33,263.87 96.58,263.88 96.83,263.89 97.08,263.89 97.33,263.90 97.58,263.91 97.83,263.92 98.08,263.92 98.33,263.93 98.58,263.94 98.83,263.95 99.08,263.95 99.33,263.96 99.58,263.97 99.83,263.97 100.08,263.98 100.33,263.98 100.58,263.99 100.83,263.99 101.08,264.00 101.33,264.01 101.58,264.01 101.83,264.02 102.08,264.02 102.33,264.02 102.58,264.03 102.83,264.03 103.08,264.04 103.33,264.04 103.58,264.05 103.83,264.05 104.08,264.05 104.33,264.06 104.58,264.06 104.83,264.06 105.08,264.07 105.33,264.07 105.58,264.07 105.83,264.08 106.08,264.08 106.33,264.08 106.58,264.09 106.83,264.09 107.08,264.09 107.33,264.09 107.58,264.10 107.83,264.10 108.08,264.10 108.33,264.10 108.58,264.10 108.83,264.11 109.08,264.11 109.33,264.11 109.58,264.11 109.83,264.11 110.08,264.11 110.33,264.11 110.58,264.12 110.83,264.12 111.08,264.12 111.33,264.12 111.58,264.12 111.83,264.12 112.08,264.12 112.33,264.12 112.58,264.12 112.83,264.12 113.08,264.12 113.33,264.12 113.58,264.12 113.83,264.12 114.08,264.12 114.33,264.12 114.58,264.12 114.83,264.12 115.08,264.12 115.33,264.12 115.58,264.12 115.83,264.12 116.08,264.12 116.33,264.12 116.58,264.12 116.83,264.12 117.08,264.12 117.33,264.12 117.58,264.11 117.83,264.11 118.08,264.11 118.33,264.11 118.58,264.11 118.83,264.11 119.08,264.11 119.33,264.10 119.58,264.10 119.83,264.10 120.08,264.10 120.33,264.09 120.58,264.09 120.83,264.09 121.08,264.09 121.33,264.08 121.58,264.08 121.83,264.08 122.08,264.08 122.33,264.07 122.58,264.07 122.83,264.07 123.08,264.06 123.33,264.06 123.58,264.05 123.83,264.05 124.08,264.05 124.33,264.04 124.58,264.04 124.83,264.03 125.08,264.03 125.33,264.02 125.58,264.02 125.83,264.01 126.08,264.01 126.33,264.00 126.58,264.00 126.83,263.99 127.08,263.98 127.33,263.98 127.58,263.97 127.83,263.96 128.08,263.96 128.33,263.95 128.58,263.94 128.83,263.94 129.08,263.93 129.33,263.92 129.58,263.91 129.83,263.90 130.08,263.89 130.33,263.89 130.58,263.88 130.83,263.87 131.08,263.86 131.33,263.85 131.58,263.84 131.83,263.83 132.08,263.82 132.33,263.80 132.58,263.79 132.83,263.78 133.08,263.77 133.33,263.76 133.58,263.74 133.83,263.73 134.08,263.72 134.33,263.70 134.58,263.69 134.83,263.67 135.08,263.66 135.33,263.64 135.58,263.63 135.83,263.61 136.08,263.60 136.33,263.58 136.58,263.56 136.83,263.54 137.08,263.52 137.33,263.51 137.58,263.49 137.83,263.47 138.08,263.45 138.33,263.43 138.58,263.41 138.83,263.38 139.08,263.36 139.33,263.34 139.58,263.32 139.83,263.29 140.08,263.27 140.33,263.25 140.58,263.22 140.83,263.20 141.08,263.17 141.33,263.15 141.58,263.12 141.83,263.10 142.08,263.07 142.33,263.04 142.58,263.02 142.83,262.99 143.08,262.97 143.33,262.94 143.58,262.91 143.83,262.89 144.08,262.86 144.33,262.83 144.58,262.81 144.83,262.78 145.08,262.76 145.33,262.73 145.58,262.71 145.83,262.69 146.08,262.67 146.33,262.64 146.58,262.62 146.83,262.60 147.08,262.59 147.33,262.57 147.58,262.55 147.83,262.54 148.08,262.53 148.33,262.52 148.58,262.51 148.83,262.50 149.08,262.49 149.33,262.49 149.58,262.48 149.83,262.48 150.08,262.48 150.33,262.48 150.58,262.49 150.83,262.49 151.08,262.50 151.33,262.51 151.58,262.52 151.83,262.53 152.08,262.54 152.33,262.56 152.58,262.57 152.83,262.59 153.08,262.61 153.33,262.63 153.58,262.65 153.83,262.67 154.08,262.69 154.33,262.72 154.58,262.74 154.83,262.77 155.08,262.79 155.33,262.82 155.58,262.85 155.83,262.87 156.08,262.90 156.33,262.93 156.58,262.95 156.83,262.98 157.08,263.01 157.33,263.04 157.58,263.06 157.83,263.09 158.08,263.12 158.33,263.14 158.58,263.17 158.83,263.20 159.08,263.22 159.33,263.25 159.58,263.27 159.83,263.30 160.08,263.32 160.33,263.35 160.58,263.37 160.83,263.39 161.08,263.42 161.33,263.44 161.58,263.46 161.83,263.48 162.08,263.50 162.33,263.53 162.58,263.55 162.83,263.57 163.08,263.59 163.33,263.60 163.58,263.62 163.83,263.64 164.08,263.66 164.33,263.68 164.58,263.69 164.83,263.71 165.08,263.73 165.33,263.74 165.58,263.76 165.83,263.77 166.08,263.79 166.33,263.80 166.58,263.82 166.83,263.83 167.08,263.84 167.33,263.86 167.58,263.87 167.83,263.88 168.08,263.89 168.33,263.90 168.58,263.92 168.83,263.93 169.08,263.94 169.33,263.95 169.58,263.96 169.83,263.97 170.08,263.98 170.33,263.99 170.58,264.00 170.83,264.01 171.08,264.02 171.33,264.03 171.58,264.03 171.83,264.04 172.08,264.05 172.33,264.06 172.58,264.07 172.83,264.08 173.08,264.08 173.33,264.09 173.58,264.10 173.83,264.10 174.08,264.11 174.33,264.12 174.58,264.12 174.83,264.13 175.08,264.14 175.33,264.14 175.58,264.15 175.83,264.16 176.08,264.16 176.33,264.17 176.58,264.17 176.83,264.18"/>
<polyline fill="none" stroke="#c04a4a" stroke-width="0.95" stroke-opacity="0.8" points="55.22,269.32 55.47,269.31 55.72,269.31 55.97,269.31 56.22,269.31 56.47,269.30 56.72,269.30 56.97,269.30 57.22,269.29 57.47,269.29 57.72,269.29 57.97,269.28 58.22,269.28 58.47,269.28 58.72,269.27 58.97,269.27 59.22,269.27 59.47,269.26 59.72,269.26 59.97,269.25 60.22,269.25 60.47,269.25 60.72,269.24 60.97,269.24 61.22,269.23 61.47,269.23 61.72,269.22 61.97,269.22 62.22,269.21 62.47,269.21 62.72,269.20 62.97,269.20 63.22,269.19 63.47,269.19 63.72,269.18 63.97,269.17 64.22,269.17 64.47,269.16 64.72,269.15 64.97,269.15 65.22,269.14 65.47,269.13 65.72,269.13 65.97,269.12 66.22,269.11 66.47,269.10 66.72,269.09 66.97,269.09 67.22,269.08 67.47,269.07 67.72,269.06 67.97,269.05 68.22,269.04 68.47,269.03 68.72,269.02 68.97,269.01 69.22,268.99 69.47,268.98 69.72,268.97 69.97,268.96 70.22,268.94 70.47,268.93 70.72,268.92 70.97,268.90 71.22,268.89 71.47,268.87 71.72,268.85 71.97,268.84 72.22,268.82 72.47,268.80 72.72,268.78 72.97,268.76 73.22,268.74 73.47,268.72 73.72,268.70 73.97,268.68 74.22,268.65 74.47,268.63 74.72,268.60 74.97,268.57 75.22,268.54 75.47,268.51 75.72,268.48 75.97,268.45 76.22,268.42 76.47,268.38 76.72,268.34 76.97,268.31 77.22,268.26 77.47,268.22 77.72,268.18 77.97,268.13 78.22,268.08 78.47,268.03 78.72,267.98 78.97,267.92 79.22,267.86 79.47,267.80 79.72,267.73 79.97,267.66 80.22,267.59 80.47,267.52 80.72,267.44 80.97,267.35 81.22,267.26 81.47,267.17 81.72,267.07 81.97,266.97 82.22,266.87 82.47,266.76 82.72,266.64 82.97,266.52 83.22,266.39 83.47,266.26 83.72,266.12 83.97,265.98 84.22,265.83 84.47,265.68 84.72,265.53 84.97,265.37 85.22,265.21 85.47,265.05 85.72,264.88 85.97,264.72 86.22,264.56 86.47,264.41 86.72,264.26 86.97,264.12 87.22,263.99 87.47,263.87 87.72,263.76 87.97,263.67 88.22,263.60 88.47,263.55 88.72,263.51 88.97,263.50 89.22,263.51 89.47,263.54 89.72,263.58 89.97,263.65 90.22,263.74 90.47,263.84 90.72,263.95 90.97,264.08 91.22,264.22 91.47,264.37 91.72,264.52 91.97,264.68 92.22,264.84 92.47,265.00 92.72,265.16 92.97,265.32 93.22,265.48 93.47,265.64 93.72,265.79 93.97,265.94 94.22,266.08 94.47,266.22 94.72,266.35 94.97,266.48 95.22,266.61 95.47,266.72 95.72,266.84 95.97,266.94 96.22,267.05 96.47,267.15 96.72,267.24 96.97,267.33 97.22,267.41 97.47,267.49 97.72,267.57 97.97,267.64 98.22,267.71 98.47,267.78 98.72,267.84 98.97,267.90 99.22,267.96 99.47,268.02 99.72,268.07 99.97,268.12 100.22,268.16 100.47,268.21 100.72,268.25 100.97,268.29 101.22,268.33 101.47,268.37 101.72,268.41 101.97,268.44 102.22,268.47 102.47,268.51 102.72,268.54 102.97,268.57 103.22,268.59 103.47,268.62 103.72,268.64 103.97,268.67 104.22,268.69 104.47,268.72 104.72,268.74 104.97,268.76 105.22,268.78 105.47,268.80 105.72,268.82 105.97,268.83 106.22,268.85 106.47,268.87 106.72,268.88 106.97,268.90 107.22,268.91 107.47,268.93 107.72,268.94 107.97,268.95 108.22,268.97 108.47,268.98 108.72,268.99 108.97,269.00 109.22,269.01 109.47,269.03 109.72,269.04 109.97,269.05 110.22,269.06 110.47,269.07 110.72,269.07 110.97,269.08 111.22,269.09 111.47,269.10 111.72,269.11 111.97,269.12 112.22,269.12 112.47,269.13 112.72,269.14 112.97,269.15 113.22,269.15 113.47,269.16 113.72,269.17 113.97,269.17 114.22,269.18 114.47,269.18 114.72,269.19 114.97,269.20 115.22,269.20 115.47,269.21 115.72,269.21 115.97,269.22 116.22,269.22 116.47,269.23 116.72,269.23 116.97,269.24 117.22,269.24 117.47,269.24 117.72,269.25 117.97,269.25 118.22,269.26 118.47,269.26 118.72,269.26 118.97,269.27 119.22,269.27 119.47,269.28 119.72,269.28 119.97,269.28 120.22,269.29 120.47,269.29 120.72,269.29 120.97,269.30 121.22,269.30 121.47,269.30 121.72,269.30 121.97,269.31 122.22,269.31 122.47,269.31 122.72,269.32 122.97,269.32 123.22,269.32 123.47,269.32 123.72,269.33 123.97,269.33 124.22,269.33 124.47,269.33 124.72,269.34 124.97,269.34 125.22,269.34 125.47,269.34 125.72,269.34 125.97,269.35 126.22,269.35 126.47,269.35 126.72,269.35 126.97,269.35 127.22,269.36 127.47,269.36 127.72,269.36 127.97,269.36 128.22,269.36 128.47,269.36 128.72,269.37 128.97,269.37 129.22,269.37 129.47,269.37 129.72,269.37 129.97,269.37 130.22,269.38 130.47,269.38 130.72,269.38 130.97,269.38 131.22,269.38 131.47,269.38 131.72,269.38 131.97,269.39 132.22,269.39 132.47,269.39 132.72,269.39 132.97,269.39 133.22,269.39 133.47,269.39 133.72,269.39 133.97,269.40 134.22,269.40 134.47,269.40 134.72,269.40 134.97,269.40 135.22,269.40 135.47,269.40 135.72,269.40 135.97,269.40 136.22,269.40 136.47,269.41 136.72,269.41 136.97,269.41 137.22,269.41 137.47,269.41 137.72,269.41 137.97,269.41 138.22,269.41 138.47,269.41 138.72,269.41 138.97,269.41 139.22,269.42 139.47,269.42 139.72,269.42 139.97,269.42 140.22,269.42 140.47,269.42 140.72,269.42 140.97,269.42 141.22,269.42 141.47,269.42 141.72,269.42 141.97,269.42 142.22,269.42 142.47,269.43 142.72,269.43 142.97,269.43 143.22,269.43 143.47,269.43 143.72,269.43 143.97,269.43 144.22,269.43 144.47,269.43 144.72,269.43 144.97,269.43 145.22,269.43 145.47,269.43 145.72,269.43 145.97,269.43 146.22,269.43 146.47,269.44 146.72,269.44 146.97,269.44 147.22,269.44 147.47,269.44 147.72,269.44 147.97,269.44 148.22,269.44 148.47,269.44 148.72,269.44 148.97,269.44 149.22,269.44 149.47,269.44 149.72,269.44 149.97,269.44 150.22,269.44 150.47,269.44 150.72,269.44 150.97,269.44 151.22,269.44 151.47,269.45 151.72,269.45 151.97,269.45 152.22,269.45 152.47,269.45 152.72,269.45 152.97,269.45 153.22,269.45 153.47,269.45 153.72,269.45 153.97,269.45 154.22,269.45 154.47,269.45 154.72,269.45 154.97,269.45 155.22,269.45 155.47,269.45 155.72,269.45 155.97,269.45 156.22,269.45 156.47,269.45 156.72,269.45 156.97,269.45 157.22,269.45 157.47,269.45 157.72,269.45 157.97,269.45 158.22,269.46 158.47,269.46 158.72,269.46 158.97,269.46 159.22,269.46 159.47,269.46 159.72,269.46 159.97,269.46 160.22,269.46 160.47,269.46 160.72,269.46 160.97,269.46 161.22,269.46 161.47,269.46 161.72,269.46 161.97,269.46 162.22,269.46 162.47,269.46 162.72,269.46 162.97,269.46 163.22,269.46 163.47,269.46 163.72,269.46 163.97,269.46 164.22,269.46 164.47,269.46 164.72,269.46 164.97,269.46 165.22,269.46 165.47,269.46 165.72,269.46 165.97,269.46 166.22,269.46 166.47,269.46 166.72,269.46 166.97,269.46 167.22,269.46 167.47,269.47 167.72,269.47 167.97,269.47 168.22,269.47 168.47,269.47 168.72,269.47 168.97,269.47 169.22,269.47 169.47,269.47 169.72,269.47 169.97,269.47 170.22,269.47 170.47,269.47 170.72,269.47 170.97,269.47 171.22,269.47 171.47,269.47 171.72,269.47 171.97,269.47 172.22,269.47 172.47,269.47 172.72,269.47 172.97,269.47 173.22,269.47 173.47,269.47 173.72,269.47 173.97,269.47"/>
<polyline fill="none" stroke="#d35a50" stroke-width="0.95" stroke-opacity="0.8" points="52.10,274.35 52.35,274.35 52.60,274.35 52.85,274.35 53.10,274.35 53.35,274.34 53.60,274.34 53.85,274.34 54.10,274.34 54.35,274.34 54.60,274.34 54.85,274.34 55.10,274.33 55.35,274.33 55.60,274.33 55.85,274.33 56.10,274.33 56.35,274.32 56.60,274.32 56.85,274.32 57.10,274.32 57.35,274.32 57.60,274.31 57.85,274.31 58.10,274.31 58.35,274.31 58.60,274.30 58.85,274.30 59.10,274.30 59.35,274.30 59.60,274.29 59.85,274.29 60.10,274.29 60.35,274.29 60.60,274.28 60.85,274.28 61.10,274.28 61.35,274.27 61.60,274.27 61.85,274.27 62.10,274.26 62.35,274.26 62.60,274.26 62.85,274.25 63.10,274.25 63.35,274.24 63.60,274.24 63.85,274.24 64.10,274.23 64.35,274.23 64.60,274.22 64.85,274.22 65.10,274.21 65.35,274.21 65.60,274.20 65.85,274.20 66.10,274.19 66.35,274.19 66.60,274.18 66.85,274.17 67.10,274.17 67.35,274.16 67.60,274.15 67.85,274.15 68.10,274.14 68.35,274.13 68.60,274.12 68.85,274.12 69.10,274.11 69.35,274.10 69.60,274.09 69.85,274.08 70.10,274.07 70.35,274.06 70.60,274.05 70.85,274.04 71.10,274.03 71.35,274.01 71.60,274.00 71.85,273.99 72.10,273.97 72.35,273.96 72.60,273.94 72.85,273.93 73.10,273.91 73.35,273.90 73.60,273.88 73.85,273.86 74.10,273.84 74.35,273.82 74.60,273.80 74.85,273.77 75.10,273.75 75.35,273.72 75.60,273.70 75.85,273.67 76.10,273.64 76.35,273.61 76.60,273.57 76.85,273.54 77.10,273.50 77.35,273.46 77.60,273.42 77.85,273.38 78.10,273.33 78.35,273.28 78.60,273.22 78.85,273.17 79.10,273.11 79.35,273.04 79.60,272.97 79.85,272.90 80.10,272.82 80.35,272.73 80.60,272.64 80.85,272.54 81.10,272.44 81.35,272.33 81.60,272.20 81.85,272.07 82.10,271.93 82.35,271.78 82.60,271.62 82.85,271.44 83.10,271.25 83.35,271.05 83.60,270.83 83.85,270.60 84.10,270.35 84.35,270.09 84.60,269.81 84.85,269.52 85.10,269.21 85.35,268.89 85.60,268.57 85.85,268.25 86.10,267.93 86.35,267.62 86.60,267.33 86.85,267.06 87.10,266.84 87.35,266.66 87.60,266.53 87.85,266.46 88.10,266.45 88.35,266.51 88.60,266.62 88.85,266.79 89.10,267.01 89.35,267.26 89.60,267.55 89.85,267.86 90.10,268.17 90.35,268.50 90.60,268.82 90.85,269.14 91.10,269.45 91.35,269.74 91.60,270.03 91.85,270.29 92.10,270.55 92.35,270.78 92.60,271.00 92.85,271.21 93.10,271.40 93.35,271.58 93.60,271.75 93.85,271.90 94.10,272.04 94.35,272.18 94.60,272.30 94.85,272.41 95.10,272.52 95.35,272.62 95.60,272.71 95.85,272.80 96.10,272.88 96.35,272.96 96.60,273.03 96.85,273.09 97.10,273.15 97.35,273.21 97.60,273.27 97.85,273.32 98.10,273.36 98.35,273.41 98.60,273.45 98.85,273.49 99.10,273.53 99.35,273.57 99.60,273.60 99.85,273.63 100.10,273.66 100.35,273.69 100.60,273.72 100.85,273.74 101.10,273.77 101.35,273.79 101.60,273.81 101.85,273.83 102.10,273.85 102.35,273.87 102.60,273.89 102.85,273.91 103.10,273.93 103.35,273.94 103.60,273.96 103.85,273.97 104.10,273.98 104.35,274.00 104.60,274.01 104.85,274.02 105.10,274.03 105.35,274.05 105.60,274.06 105.85,274.07 106.10,274.08 106.35,274.09 106.60,274.10 106.85,274.11 107.10,274.11 107.35,274.12 107.60,274.13 107.85,274.14 108.10,274.15 108.35,274.15 108.60,274.16 108.85,274.17 109.10,274.17 109.35,274.18 109.60,274.18 109.85,274.19 110.10,274.20 110.35,274.20 110.60,274.21 110.85,274.21 111.10,274.22 111.35,274.22 111.60,274.23 111.85,274.23 112.10,274.24 112.35,274.24 112.60,274.24 112.85,274.25 113.10,274.25 113.35,274.26 113.60,274.26 113.85,274.26 114.10,274.27 114.35,274.27 114.60,274.27 114.85,274.28 115.10,274.28 115.35,274.28 115.60,274.29 115.85,274.29 116.10,274.29 116.35,274.29 116.60,274.30 116.85,274.30 117.10,274.30 117.35,274.30 117.60,274.31 117.85,274.31 118.10,274.31 118.35,274.31 118.60,274.32 118.85,274.32 119.10,274.32 119.35,274.32 119.60,274.32 119.85,274.33 120.10,274.33 120.35,274.33 120.60,274.33 120.85,274.33 121.10,274.33 121.35,274.34 121.60,274.34 121.85,274.34 122.10,274.34 122.35,274.34 122.60,274.34 122.85,274.35 123.10,274.35 123.35,274.35 123.60,274.35 123.85,274.35 124.10,274.35 124.35,274.35 124.60,274.36 124.85,274.36 125.10,274.36 125.35,274.36 125.60,274.36 125.85,274.36 126.10,274.36 126.35,274.36 126.60,274.36 126.85,274.37 127.10,274.37 127.35,274.37 127.60,274.37 127.85,274.37 128.10,274.37 128.35,274.37 128.60,274.37 128.85,274.37 129.10,274.37 129.35,274.38 129.60,274.38 129.85,274.38 130.10,274.38 130.35,274.38 130.60,274.38 130.85,274.38 131.10,274.38 131.35,274.38 131.60,274.38 131.85,274.38 132.10,274.38 132.35,274.39 132.60,274.39 132.85,274.39 133.10,274.39 133.35,274.39 133.60,274.39 133.85,274.39 134.10,274.39 134.35,274.39 134.60,274.39 134.85,274.39 135.10,274.39 135.35,274.39 135.60,274.39 135.85,274.39 136.10,274.40 136.35,274.40 136.60,274.40 136.85,274.40 137.10,274.40 137.35,274.40 137.60,274.40 137.85,274.40 138.10,274.40 138.35,274.40 138.60,274.40 138.85,274.40 139.10,274.40 139.35,274.40 139.60,274.40 139.85,274.40 140.10,274.40 140.35,274.40 140.60,274.40 140.85,274.40 141.10,274.40 141.35,274.41 141.60,274.41 141.85,274.41 142.10,274.41 142.35,274.41 142.60,274.41 142.85,274.41 143.10,274.41 143.35,274.41 143.60,274.41 143.85,274.41 144.10,274.41 144.35,274.41 144.60,274.41 144.85,274.41 145.10,274.41 145.35,274.41 145.60,274.41 145.85,274.41 146.10,274.41 146.35,274.41 146.60,274.41 146.85,274.41 147.10,274.41 147.35,274.41 147.60,274.41 147.85,274.41 148.10,274.41 148.35,274.42 148.60,274.42 148.85,274.42 149.10,274.42 149.35,274.42 149.60,274.42 149.85,274.42 150.10,274.42 150.35,274.42 150.60,274.42 150.85,274.42 151.10,274.42 151.35,274.42 151.60,274.42 151.85,274.42 152.10,274.42 152.35,274.42 152.60,274.42 152.85,274.42 153.10,274.42 153.35,274.42 153.60,274.42 153.85,274.42 154.10,274.42 154.35,274.42 154.60,274.42 154.85,274.42 155.10,274.42 155.35,274.42 155.60,274.42 155.85,274.42 156.10,274.42 156.35,274.42 156.60,274.42 156.85,274.42 157.10,274.42 157.35,274.42 157.60,274.42 157.85,274.42 158.10,274.42 158.35,274.42 158.60,274.42 158.85,274.42 159.10,274.42 159.35,274.42 159.60,274.43 159.85,274.43 160.10,274.43 160.35,274.43 160.60,274.43 160.85,274.43 161.10,274.43 161.35,274.43 161.60,274.43 161.85,274.43 162.10,274.43 162.35,274.43 162.60,274.43 162.85,274.43 163.10,274.43 163.35,274.43 163.60,274.43 163.85,274.43 164.10,274.43 164.35,274.43 164.60,274.43 164.85,274.43 165.10,274.43 165.35,274.43 165.60,274.43 165.85,274.43 166.10,274.43 166.35,274.43 166.60,274.43 166.85,274.43 167.10,274.43 167.35,274.43 167.60,274.43 167.85,274.43 168.10,274.43 168.35,274.43 168.60,274.43 168.85,274.43 169.10,274.43 169.35,274.43 169.60,274.43 169.85,274.43 170.10,274.43 170.35,274.43 170.60,274.43 170.85,274.43 171.10,274.43"/>
<polyline fill="none" stroke="#f0843f" stroke-width="0.95" stroke-opacity="0.8" points="48.98,279.34 49.23,279.34 49.48,279.33 49.73,279.33 49.98,279.33 50.23,279.33 50.48,279.33 50.73,279.33 50.98,279.33 51.23,279.33 51.48,279.33 51.73,279.33 51.98,279.32 52.23,279.32 52.48,279.32 52.73,279.32 52.98,279.32 53.23,279.32 53.48,279.32 53.73,279.32 53.98,279.32 54.23,279.31 54.48,279.31 54.73,279.31 54.98,279.31 55.23,279.31 55.48,279.31 55.73,279.31 55.98,279.30 56.23,279.30 56.48,279.30 56.73,279.30 56.98,279.30 57.23,279.30 57.48,279.29 57.73,279.29 57.98,279.29 58.23,279.29 58.48,279.29 58.73,279.28 58.98,279.28 59.23,279.28 59.48,279.28 59.73,279.27 59.98,279.27 60.23,279.27 60.48,279.27 60.73,279.26 60.98,279.26 61.23,279.26 61.48,279.26 61.73,279.25 61.98,279.25 62.23,279.25 62.48,279.24 62.73,279.24 62.98,279.24 63.23,279.23 63.48,279.23 63.73,279.23 63.98,279.22 64.23,279.22 64.48,279.21 64.73,279.21 64.98,279.20 65.23,279.20 65.48,279.20 65.73,279.19 65.98,279.19 66.23,279.18 66.48,279.17 66.73,279.17 66.98,279.16 67.23,279.16 67.48,279.15 67.73,279.14 67.98,279.14 68.23,279.13 68.48,279.12 68.73,279.11 68.98,279.10 69.23,279.10 69.48,279.09 69.73,279.08 69.98,279.07 70.23,279.06 70.48,279.05 70.73,279.03 70.98,279.02 71.23,279.01 71.48,279.00 71.73,278.98 71.98,278.97 72.23,278.95 72.48,278.94 72.73,278.92 72.98,278.90 73.23,278.88 73.48,278.86 73.73,278.84 73.98,278.82 74.23,278.80 74.48,278.77 74.73,278.74 74.98,278.71 75.23,278.68 75.48,278.65 75.73,278.62 75.98,278.58 76.23,278.54 76.48,278.50 76.73,278.45 76.98,278.40 77.23,278.35 77.48,278.29 77.73,278.23 77.98,278.16 78.23,278.09 78.48,278.01 78.73,277.92 78.98,277.83 79.23,277.72 79.48,277.61 79.73,277.48 79.98,277.34 80.23,277.19 80.48,277.02 80.73,276.83 80.98,276.62 81.23,276.39 81.48,276.12 81.73,275.83 81.98,275.50 82.23,275.13 82.48,274.71 82.73,274.24 82.98,273.71 83.23,273.12 83.48,272.46 83.73,271.73 83.98,270.94 84.23,270.08 84.48,269.19 84.73,268.28 84.98,267.40 85.23,266.62 85.48,265.98 85.73,265.56 85.98,265.40 86.23,265.52 86.48,265.89 86.73,266.49 86.98,267.26 87.23,268.12 87.48,269.03 87.73,269.93 87.98,270.79 88.23,271.60 88.48,272.34 88.73,273.01 88.98,273.61 89.23,274.15 89.48,274.63 89.73,275.06 89.98,275.44 90.23,275.77 90.48,276.07 90.73,276.34 90.98,276.58 91.23,276.79 91.48,276.99 91.73,277.16 91.98,277.32 92.23,277.46 92.48,277.59 92.73,277.70 92.98,277.81 93.23,277.90 93.48,277.99 93.73,278.07 93.98,278.15 94.23,278.22 94.48,278.28 94.73,278.34 94.98,278.39 95.23,278.44 95.48,278.49 95.73,278.53 95.98,278.57 96.23,278.61 96.48,278.65 96.73,278.68 96.98,278.71 97.23,278.74 97.48,278.77 97.73,278.79 97.98,278.82 98.23,278.84 98.48,278.86 98.73,278.88 98.98,278.90 99.23,278.92 99.48,278.93 99.73,278.95 99.98,278.97 100.23,278.98 100.48,278.99 100.73,279.01 100.98,279.02 101.23,279.03 101.48,279.04 101.73,279.05 101.98,279.07 102.23,279.08 102.48,279.08 102.73,279.09 102.98,279.10 103.23,279.11 103.48,279.12 103.73,279.13 103.98,279.13 104.23,279.14 104.48,279.15 104.73,279.15 104.98,279.16 105.23,279.17 105.48,279.17 105.73,279.18 105.98,279.18 106.23,279.19 106.48,279.19 106.73,279.20 106.98,279.20 107.23,279.21 107.48,279.21 107.73,279.22 107.98,279.22 108.23,279.23 108.48,279.23 108.73,279.23 108.98,279.24 109.23,279.24 109.48,279.24 109.73,279.25 109.98,279.25 110.23,279.25 110.48,279.26 110.73,279.26 110.98,279.26 111.23,279.26 111.48,279.27 111.73,279.27 111.98,279.27 112.23,279.27 112.48,279.28 112.73,279.28 112.98,279.28 113.23,279.28 113.48,279.29 113.73,279.29 113.98,279.29 114.23,279.29 114.48,279.29 114.73,279.29 114.98,279.30 115.23,279.30 115.48,279.30 115.73,279.30 115.98,279.30 116.23,279.30 116.48,279.31 116.73,279.31 116.98,279.31 117.23,279.31 117.48,279.31 117.73,279.31 117.98,279.31 118.23,279.32 118.48,279.32 118.73,279.32 118.98,279.32 119.23,279.32 119.48,279.32 119.73,279.32 119.98,279.32 120.23,279.33 120.48,279.33 120.73,279.33 120.98,279.33 121.23,279.33 121.48,279.33 121.73,279.33 121.98,279.33 122.23,279.33 122.48,279.33 122.73,279.34 122.98,279.34 123.23,279.34 123.48,279.34 123.73,279.34 123.98,279.34 124.23,279.34 124.48,279.34 124.73,279.34 124.98,279.34 125.23,279.34 125.48,279.34 125.73,279.34 125.98,279.35 126.23,279.35 126.48,279.35 126.73,279.35 126.98,279.35 127.23,279.35 127.48,279.35 127.73,279.35 127.98,279.35 128.23,279.35 128.48,279.35 128.73,279.35 128.98,279.35 129.23,279.35 129.48,279.35 129.73,279.35 129.98,279.35 130.23,279.36 130.48,279.36 130.73,279.36 130.98,279.36 131.23,279.36 131.48,279.36 131.73,279.36 131.98,279.36 132.23,279.36 132.48,279.36 132.73,279.36 132.98,279.36 133.23,279.36 133.48,279.36 133.73,279.36 133.98,279.36 134.23,279.36 134.48,279.36 134.73,279.36 134.98,279.36 135.23,279.36 135.48,279.36 135.73,279.36 135.98,279.37 136.23,279.37 136.48,279.37 136.73,279.37 136.98,279.37 137.23,279.37 137.48,279.37 137.73,279.37 137.98,279.37 138.23,279.37 138.48,279.37 138.73,279.37 138.98,279.37 139.23,279.37 139.48,279.37 139.73,279.37 139.98,279.37 140.23,279.37 140.48,279.37 140.73,279.37 140.98,279.37 141.23,279.37 141.48,279.37 141.73,279.37 141.98,279.37 142.23,279.37 142.48,279.37 142.73,279.37 142.98,279.37 143.23,279.37 143.48,279.37 143.73,279.37 143.98,279.37 144.23,279.37 144.48,279.37 144.73,279.37 144.98,279.37 145.23,279.38 145.48,279.38 145.73,279.38 145.98,279.38 146.23,279.38 146.48,279.38 146.73,279.38 146.98,279.38 147.23,279.38 147.48,279.38 147.73,279.38 147.98,279.38 148.23,279.38 148.48,279.38 148.73,279.38 148.98,279.38 149.23,279.38 149.48,279.38 149.73,279.38 149.98,279.38 150.23,279.38 150.48,279.38 150.73,279.38 150.98,279.38 151.23,279.38 151.48,279.38 151.73,279.38 151.98,279.38 152.23,279.38 152.48,279.38 152.73,279.38 152.98,279.38 153.23,279.38 153.48,279.38 153.73,279.38 153.98,279.38 154.23,279.38 154.48,279.38 154.73,279.38 154.98,279.38 155.23,279.38 155.48,279.38 155.73,279.38 155.98,279.38 156.23,279.38 156.48,279.38 156.73,279.38 156.98,279.38 157.23,279.38 157.48,279.38 157.73,279.38 157.98,279.38 158.23,279.38 158.48,279.38 158.73,279.38 158.98,279.38 159.23,279.38 159.48,279.38 159.73,279.38 159.98,279.38 160.23,279.38 160.48,279.38 160.73,279.38 160.98,279.38 161.23,279.38 161.48,279.38 161.73,279.38 161.98,279.38 162.23,279.38 162.48,279.39 162.73,279.39 162.98,279.39 163.23,279.39 163.48,279.39 163.73,279.39 163.98,279.39 164.23,279.39 164.48,279.39 164.73,279.39 164.98,279.39 165.23,279.39 165.48,279.39 165.73,279.39 165.98,279.39 166.23,279.39 166.48,279.39 166.73,279.39 166.98,279.39 167.23,279.39 167.48,279.39 167.73,279.39 167.98,279.39 168.23,279.39 168.48,279.39"/>
<polyline fill="none" stroke="#f2a060" stroke-width="0.95" stroke-opacity="0.8" points="45.86,284.31 46.11,284.31 46.36,284.31 46.61,284.30 46.86,284.30 47.11,284.30 47.36,284.30 47.61,284.30 47.86,284.30 48.11,284.30 48.36,284.30 48.61,284.30 48.86,284.30 49.11,284.30 49.36,284.30 49.61,284.30 49.86,284.30 50.11,284.30 50.36,284.29 50.61,284.29 50.86,284.29 51.11,284.29 51.36,284.29 51.61,284.29 51.86,284.29 52.11,284.29 52.36,284.29 52.61,284.29 52.86,284.29 53.11,284.28 53.36,284.28 53.61,284.28 53.86,284.28 54.11,284.28 54.36,284.28 54.61,284.28 54.86,284.28 55.11,284.28 55.36,284.27 55.61,284.27 55.86,284.27 56.11,284.27 56.36,284.27 56.61,284.27 56.86,284.27 57.11,284.26 57.36,284.26 57.61,284.26 57.86,284.26 58.11,284.26 58.36,284.26 58.61,284.25 58.86,284.25 59.11,284.25 59.36,284.25 59.61,284.25 59.86,284.24 60.11,284.24 60.36,284.24 60.61,284.24 60.86,284.23 61.11,284.23 61.36,284.23 61.61,284.23 61.86,284.22 62.11,284.22 62.36,284.22 62.61,284.22 62.86,284.21 63.11,284.21 63.36,284.21 63.61,284.20 63.86,284.20 64.11,284.20 64.36,284.19 64.61,284.19 64.86,284.18 65.11,284.18 65.36,284.17 65.61,284.17 65.86,284.17 66.11,284.16 66.36,284.16 66.61,284.15 66.86,284.14 67.11,284.14 67.36,284.13 67.61,284.13 67.86,284.12 68.11,284.11 68.36,284.10 68.61,284.10 68.86,284.09 69.11,284.08 69.36,284.07 69.61,284.06 69.86,284.05 70.11,284.04 70.36,284.03 70.61,284.02 70.86,284.01 71.11,284.00 71.36,283.98 71.61,283.97 71.86,283.95 72.11,283.94 72.36,283.92 72.61,283.90 72.86,283.88 73.11,283.86 73.36,283.84 73.61,283.82 73.86,283.79 74.11,283.77 74.36,283.74 74.61,283.71 74.86,283.68 75.11,283.64 75.36,283.60 75.61,283.56 75.86,283.52 76.11,283.47 76.36,283.42 76.61,283.36 76.86,283.30 77.11,283.23 77.36,283.16 77.61,283.07 77.86,282.98 78.11,282.88 78.36,282.77 78.61,282.64 78.86,282.50 79.11,282.34 79.36,282.17 79.61,281.96 79.86,281.73 80.11,281.47 80.36,281.17 80.61,280.82 80.86,280.42 81.11,279.95 81.36,279.40 81.61,278.76 81.86,278.00 82.11,277.11 82.36,276.07 82.61,274.84 82.86,273.42 83.11,271.82 83.36,270.08 83.61,268.28 83.86,266.60 84.11,265.25 84.36,264.47 84.61,264.42 84.86,265.12 85.11,266.41 85.36,268.06 85.61,269.86 85.86,271.61 86.11,273.24 86.36,274.68 86.61,275.92 86.86,276.99 87.11,277.90 87.36,278.67 87.61,279.33 87.86,279.89 88.11,280.37 88.36,280.78 88.61,281.13 88.86,281.44 89.11,281.70 89.36,281.94 89.61,282.14 89.86,282.32 90.11,282.48 90.36,282.63 90.61,282.75 90.86,282.87 91.11,282.97 91.36,283.06 91.61,283.15 91.86,283.22 92.11,283.29 92.36,283.35 92.61,283.41 92.86,283.46 93.11,283.51 93.36,283.56 93.61,283.60 93.86,283.64 94.11,283.67 94.36,283.70 94.61,283.74 94.86,283.76 95.11,283.79 95.36,283.82 95.61,283.84 95.86,283.86 96.11,283.88 96.36,283.90 96.61,283.92 96.86,283.93 97.11,283.95 97.36,283.97 97.61,283.98 97.86,283.99 98.11,284.01 98.36,284.02 98.61,284.03 98.86,284.04 99.11,284.05 99.36,284.06 99.61,284.07 99.86,284.08 100.11,284.09 100.36,284.10 100.61,284.10 100.86,284.11 101.11,284.12 101.36,284.12 101.61,284.13 101.86,284.14 102.11,284.14 102.36,284.15 102.61,284.15 102.86,284.16 103.11,284.16 103.36,284.17 103.61,284.17 103.86,284.18 104.11,284.18 104.36,284.19 104.61,284.19 104.86,284.19 105.11,284.20 105.36,284.20 105.61,284.21 105.86,284.21 106.11,284.21 106.36,284.22 106.61,284.22 106.86,284.22 107.11,284.22 107.36,284.23 107.61,284.23 107.86,284.23 108.11,284.23 108.36,284.24 108.61,284.24 108.86,284.24 109.11,284.24 109.36,284.25 109.61,284.25 109.86,284.25 110.11,284.25 110.36,284.25 110.61,284.26 110.86,284.26 111.11,284.26 111.36,284.26 111.61,284.26 111.86,284.26 112.11,284.27 112.36,284.27 112.61,284.27 112.86,284.27 113.11,284.27 113.36,284.27 113.61,284.27 113.86,284.28 114.11,284.28 114.36,284.28 114.61,284.28 114.86,284.28 115.11,284.28 115.36,284.28 115.61,284.28 115.86,284.28 116.11,284.29 116.36,284.29 116.61,284.29 116.86,284.29 117.11,284.29 117.36,284.29 117.61,284.29 117.86,284.29 118.11,284.29 118.36,284.29 118.61,284.29 118.86,284.30 119.11,284.30 119.36,284.30 119.61,284.30 119.86,284.30 120.11,284.30 120.36,284.30 120.61,284.30 120.86,284.30 121.11,284.30 121.36,284.30 121.61,284.30 121.86,284.30 122.11,284.30 122.36,284.30 122.61,284.31 122.86,284.31 123.11,284.31 123.36,284.31 123.61,284.31 123.86,284.31 124.11,284.31 124.36,284.31 124.61,284.31 124.86,284.31 125.11,284.31 125.36,284.31 125.61,284.31 125.86,284.31 126.11,284.31 126.36,284.31 126.61,284.31 126.86,284.31 127.11,284.31 127.36,284.31 127.61,284.32 127.86,284.32 128.11,284.32 128.36,284.32 128.61,284.32 128.86,284.32 129.11,284.32 129.36,284.32 129.61,284.32 129.86,284.32 130.11,284.32 130.36,284.32 130.61,284.32 130.86,284.32 131.11,284.32 131.36,284.32 131.61,284.32 131.86,284.32 132.11,284.32 132.36,284.32 132.61,284.32 132.86,284.32 133.11,284.32 133.36,284.32 133.61,284.32 133.86,284.32 134.11,284.32 134.36,284.32 134.61,284.32 134.86,284.32 135.11,284.32 135.36,284.32 135.61,284.33 135.86,284.33 136.11,284.33 136.36,284.33 136.61,284.33 136.86,284.33 137.11,284.33 137.36,284.33 137.61,284.33 137.86,284.33 138.11,284.33 138.36,284.33 138.61,284.33 138.86,284.33 139.11,284.33 139.36,284.33 139.61,284.33 139.86,284.33 140.11,284.33 140.36,284.33 140.61,284.33 140.86,284.33 141.11,284.33 141.36,284.33 141.61,284.33 141.86,284.33 142.11,284.33 142.36,284.33 142.61,284.33 142.86,284.33 143.11,284.33 143.36,284.33 143.61,284.33 143.86,284.33 144.11,284.33 144.36,284.33 144.61,284.33 144.86,284.33 145.11,284.33 145.36,284.33 145.61,284.33 145.86,284.33 146.11,284.33 146.36,284.33 146.61,284.33 146.86,284.33 147.11,284.33 147.36,284.33 147.61,284.33 147.86,284.33 148.11,284.33 148.36,284.33 148.61,284.33 148.86,284.33 149.11,284.33 149.36,284.33 149.61,284.33 149.86,284.33 150.11,284.33 150.36,284.34 150.61,284.34 150.86,284.34 151.11,284.34 151.36,284.34 151.61,284.34 151.86,284.34 152.11,284.34 152.36,284.34 152.61,284.34 152.86,284.34 153.11,284.34 153.36,284.34 153.61,284.34 153.86,284.34 154.11,284.34 154.36,284.34 154.61,284.34 154.86,284.34 155.11,284.34 155.36,284.34 155.61,284.34 155.86,284.34 156.11,284.34 156.36,284.34 156.61,284.34 156.86,284.34 157.11,284.34 157.36,284.34 157.61,284.34 157.86,284.34 158.11,284.34 158.36,284.34 158.61,284.34 158.86,284.34 159.11,284.34 159.36,284.34 159.61,284.34 159.86,284.34 160.11,284.34 160.36,284.34 160.61,284.34 160.86,284.34 161.11,284.34 161.36,284.34 161.61,284.34 161.86,284.34 162.11,284.34 162.36,284.34 162.61,284.34 162.86,284.34 163.11,284.34 163.36,284.34 163.61,284.34 163.86,284.34 164.11,284.34 164.36,284.34 164.61,284.34 164.86,284.34 165.11,284.34 165.36,284.34 165.61,284.34"/>
<polyline fill="none" stroke="#e8c25a" stroke-width="0.95" stroke-opacity="0.8" points="42.74,289.28 42.99,289.28 43.24,289.28 43.49,289.28 43.74,289.28 43.99,289.28 44.24,289.28 44.49,289.28 44.74,289.28 44.99,289.28 45.24,289.28 45.49,289.27 45.74,289.27 45.99,289.27 46.24,289.27 46.49,289.27 46.74,289.27 46.99,289.27 47.24,289.27 47.49,289.27 47.74,289.27 47.99,289.27 48.24,289.27 48.49,289.27 48.74,289.27 48.99,289.27 49.24,289.27 49.49,289.27 49.74,289.27 49.99,289.27 50.24,289.27 50.49,289.27 50.74,289.26 50.99,289.26 51.24,289.26 51.49,289.26 51.74,289.26 51.99,289.26 52.24,289.26 52.49,289.26 52.74,289.26 52.99,289.26 53.24,289.26 53.49,289.26 53.74,289.26 53.99,289.26 54.24,289.25 54.49,289.25 54.74,289.25 54.99,289.25 55.24,289.25 55.49,289.25 55.74,289.25 55.99,289.25 56.24,289.25 56.49,289.25 56.74,289.24 56.99,289.24 57.24,289.24 57.49,289.24 57.74,289.24 57.99,289.24 58.24,289.24 58.49,289.24 58.74,289.23 58.99,289.23 59.24,289.23 59.49,289.23 59.74,289.23 59.99,289.23 60.24,289.22 60.49,289.22 60.74,289.22 60.99,289.22 61.24,289.21 61.49,289.21 61.74,289.21 61.99,289.21 62.24,289.21 62.49,289.20 62.74,289.20 62.99,289.20 63.24,289.19 63.49,289.19 63.74,289.19 63.99,289.18 64.24,289.18 64.49,289.18 64.74,289.17 64.99,289.17 65.24,289.16 65.49,289.16 65.74,289.15 65.99,289.15 66.24,289.14 66.49,289.14 66.74,289.13 66.99,289.12 67.24,289.12 67.49,289.11 67.74,289.10 67.99,289.09 68.24,289.08 68.49,289.08 68.74,289.07 68.99,289.05 69.24,289.04 69.49,289.03 69.74,289.02 69.99,289.00 70.24,288.99 70.49,288.97 70.74,288.95 70.99,288.93 71.24,288.91 71.49,288.89 71.74,288.87 71.99,288.84 72.24,288.81 72.49,288.78 72.74,288.74 72.99,288.70 73.24,288.66 73.49,288.61 73.74,288.55 73.99,288.49 74.24,288.42 74.49,288.34 74.74,288.25 74.99,288.15 75.24,288.03 75.49,287.89 75.74,287.73 75.99,287.54 76.24,287.32 76.49,287.05 76.74,286.72 76.99,286.32 77.24,285.82 77.49,285.19 77.74,284.38 77.99,283.34 78.24,281.97 78.49,280.15 78.74,277.69 78.99,274.43 79.24,270.27 79.49,265.47 79.74,261.19 79.99,259.30 80.24,260.95 80.49,265.13 80.74,269.93 80.99,274.16 81.24,277.49 81.49,279.99 81.74,281.86 81.99,283.26 82.24,284.32 82.49,285.14 82.74,285.78 82.99,286.28 83.24,286.69 83.49,287.03 83.74,287.30 83.99,287.53 84.24,287.72 84.49,287.88 84.74,288.02 84.99,288.14 85.24,288.25 85.49,288.34 85.74,288.42 85.99,288.49 86.24,288.55 86.49,288.60 86.74,288.65 86.99,288.70 87.24,288.74 87.49,288.77 87.74,288.81 87.99,288.84 88.24,288.86 88.49,288.89 88.74,288.91 88.99,288.93 89.24,288.95 89.49,288.97 89.74,288.99 89.99,289.00 90.24,289.02 90.49,289.03 90.74,289.04 90.99,289.05 91.24,289.06 91.49,289.07 91.74,289.08 91.99,289.09 92.24,289.10 92.49,289.11 92.74,289.12 92.99,289.12 93.24,289.13 93.49,289.14 93.74,289.14 93.99,289.15 94.24,289.15 94.49,289.16 94.74,289.16 94.99,289.17 95.24,289.17 95.49,289.18 95.74,289.18 95.99,289.18 96.24,289.19 96.49,289.19 96.74,289.19 96.99,289.20 97.24,289.20 97.49,289.20 97.74,289.20 97.99,289.21 98.24,289.21 98.49,289.21 98.74,289.21 98.99,289.22 99.24,289.22 99.49,289.22 99.74,289.22 99.99,289.23 100.24,289.23 100.49,289.23 100.74,289.23 100.99,289.23 101.24,289.23 101.49,289.24 101.74,289.24 101.99,289.24 102.24,289.24 102.49,289.24 102.74,289.24 102.99,289.24 103.24,289.24 103.49,289.25 103.74,289.25 103.99,289.25 104.24,289.25 104.49,289.25 104.74,289.25 104.99,289.25 105.24,289.25 105.49,289.25 105.74,289.25 105.99,289.26 106.24,289.26 106.49,289.26 106.74,289.26 106.99,289.26 107.24,289.26 107.49,289.26 107.74,289.26 107.99,289.26 108.24,289.26 108.49,289.26 108.74,289.26 108.99,289.26 109.24,289.26 109.49,289.27 109.74,289.27 109.99,289.27 110.24,289.27 110.49,289.27 110.74,289.27 110.99,289.27 111.24,289.27 111.49,289.27 111.74,289.27 111.99,289.27 112.24,289.27 112.49,289.27 112.74,289.27 112.99,289.27 113.24,289.27 113.49,289.27 113.74,289.27 113.99,289.27 114.24,289.27 114.49,289.27 114.74,289.28 114.99,289.28 115.24,289.28 115.49,289.28 115.74,289.28 115.99,289.28 116.24,289.28 116.49,289.28 116.74,289.28 116.99,289.28 117.24,289.28 117.49,289.28 117.74,289.28 117.99,289.28 118.24,289.28 118.49,289.28 118.74,289.28 118.99,289.28 119.24,289.28 119.49,289.28 119.74,289.28 119.99,289.28 120.24,289.28 120.49,289.28 120.74,289.28 120.99,289.28 121.24,289.28 121.49,289.28 121.74,289.28 121.99,289.28 122.24,289.28 122.49,289.28 122.74,289.28 122.99,289.28 123.24,289.28 123.49,289.28 123.74,289.28 123.99,289.28 124.24,289.28 124.49,289.28 124.74,289.29 124.99,289.29 125.24,289.29 125.49,289.29 125.74,289.29 125.99,289.29 126.24,289.29 126.49,289.29 126.74,289.29 126.99,289.29 127.24,289.29 127.49,289.29 127.74,289.29 127.99,289.29 128.24,289.29 128.49,289.29 128.74,289.29 128.99,289.29 129.24,289.29 129.49,289.29 129.74,289.29 129.99,289.29 130.24,289.29 130.49,289.29 130.74,289.29 130.99,289.29 131.24,289.29 131.49,289.29 131.74,289.29 131.99,289.29 132.24,289.29 132.49,289.29 132.74,289.29 132.99,289.29 133.24,289.29 133.49,289.29 133.74,289.29 133.99,289.29 134.24,289.29 134.49,289.29 134.74,289.29 134.99,289.29 135.24,289.29 135.49,289.29 135.74,289.29 135.99,289.29 136.24,289.29 136.49,289.29 136.74,289.29 136.99,289.29 137.24,289.29 137.49,289.29 137.74,289.29 137.99,289.29 138.24,289.29 138.49,289.29 138.74,289.29 138.99,289.29 139.24,289.29 139.49,289.29 139.74,289.29 139.99,289.29 140.24,289.29 140.49,289.29 140.74,289.29 140.99,289.29 141.24,289.29 141.49,289.29 141.74,289.29 141.99,289.29 142.24,289.29 142.49,289.29 142.74,289.29 142.99,289.29 143.24,289.29 143.49,289.29 143.74,289.29 143.99,289.29 144.24,289.29 144.49,289.29 144.74,289.29 144.99,289.29 145.24,289.29 145.49,289.29 145.74,289.29 145.99,289.29 146.24,289.29 146.49,289.29 146.74,289.29 146.99,289.29 147.24,289.29 147.49,289.29 147.74,289.29 147.99,289.29 148.24,289.29 148.49,289.29 148.74,289.29 148.99,289.29 149.24,289.29 149.49,289.29 149.74,289.29 149.99,289.29 150.24,289.29 150.49,289.29 150.74,289.29 150.99,289.29 151.24,289.29 151.49,289.29 151.74,289.29 151.99,289.29 152.24,289.29 152.49,289.29 152.74,289.29 152.99,289.29 153.24,289.29 153.49,289.29 153.74,289.29 153.99,289.29 154.24,289.29 154.49,289.29 154.74,289.29 154.99,289.29 155.24,289.29 155.49,289.29 155.74,289.29 155.99,289.29 156.24,289.29 156.49,289.29 156.74,289.29 156.99,289.29 157.24,289.29 157.49,289.30 157.74,289.30 157.99,289.30 158.24,289.30 158.49,289.30 158.74,289.30 158.99,289.30 159.24,289.30 159.49,289.30 159.74,289.30 159.99,289.30 160.24,289.30 160.49,289.30 160.74,289.30 160.99,289.30 161.24,289.30 161.49,289.30 161.74,289.30 161.99,289.30 162.24,289.30 162.49,289.30 162.74,289.30 162.99,289.30"/>
<polyline fill="none" stroke="#e6d870" stroke-width="0.95" stroke-opacity="0.8" points="39.62,294.24 39.87,294.24 40.12,294.24 40.37,294.24 40.62,294.24 40.87,294.24 41.12,294.23 41.37,294.23 41.62,294.23 41.87,294.23 42.12,294.23 42.37,294.23 42.62,294.23 42.87,294.23 43.12,294.23 43.37,294.23 43.62,294.23 43.87,294.23 44.12,294.23 44.37,294.23 44.62,294.23 44.87,294.23 45.12,294.23 45.37,294.23 45.62,294.23 45.87,294.23 46.12,294.23 46.37,294.23 46.62,294.23 46.87,294.23 47.12,294.23 47.37,294.23 47.62,294.23 47.87,294.23 48.12,294.23 48.37,294.23 48.62,294.23 48.87,294.23 49.12,294.23 49.37,294.23 49.62,294.22 49.87,294.22 50.12,294.22 50.37,294.22 50.62,294.22 50.87,294.22 51.12,294.22 51.37,294.22 51.62,294.22 51.87,294.22 52.12,294.22 52.37,294.22 52.62,294.22 52.87,294.22 53.12,294.22 53.37,294.22 53.62,294.22 53.87,294.22 54.12,294.21 54.37,294.21 54.62,294.21 54.87,294.21 55.12,294.21 55.37,294.21 55.62,294.21 55.87,294.21 56.12,294.21 56.37,294.21 56.62,294.21 56.87,294.21 57.12,294.20 57.37,294.20 57.62,294.20 57.87,294.20 58.12,294.20 58.37,294.20 58.62,294.20 58.87,294.20 59.12,294.20 59.37,294.19 59.62,294.19 59.87,294.19 60.12,294.19 60.37,294.19 60.62,294.19 60.87,294.18 61.12,294.18 61.37,294.18 61.62,294.18 61.87,294.18 62.12,294.17 62.37,294.17 62.62,294.17 62.87,294.17 63.12,294.16 63.37,294.16 63.62,294.16 63.87,294.16 64.12,294.15 64.37,294.15 64.62,294.15 64.87,294.14 65.12,294.14 65.37,294.13 65.62,294.13 65.87,294.12 66.12,294.12 66.37,294.11 66.62,294.11 66.87,294.10 67.12,294.10 67.37,294.09 67.62,294.08 67.87,294.08 68.12,294.07 68.37,294.06 68.62,294.05 68.87,294.04 69.12,294.03 69.37,294.02 69.62,294.00 69.87,293.99 70.12,293.98 70.37,293.96 70.62,293.94 70.87,293.92 71.12,293.90 71.37,293.88 71.62,293.85 71.87,293.83 72.12,293.80 72.37,293.76 72.62,293.72 72.87,293.68 73.12,293.63 73.37,293.58 73.62,293.51 73.87,293.44 74.12,293.36 74.37,293.26 74.62,293.15 74.87,293.02 75.12,292.86 75.37,292.67 75.62,292.44 75.87,292.16 76.12,291.81 76.37,291.37 76.62,290.79 76.87,290.04 77.12,289.03 77.37,287.63 77.62,285.67 77.87,282.86 78.12,278.82 78.37,273.20 78.62,266.44 78.87,261.09 79.12,261.03 79.37,266.31 79.62,273.07 79.87,278.72 80.12,282.80 80.37,285.63 80.62,287.60 80.87,289.00 81.12,290.02 81.37,290.78 81.62,291.36 81.87,291.80 82.12,292.16 82.37,292.44 82.62,292.67 82.87,292.86 83.12,293.02 83.37,293.15 83.62,293.26 83.87,293.36 84.12,293.44 84.37,293.51 84.62,293.58 84.87,293.63 85.12,293.68 85.37,293.72 85.62,293.76 85.87,293.80 86.12,293.83 86.37,293.85 86.62,293.88 86.87,293.90 87.12,293.92 87.37,293.94 87.62,293.96 87.87,293.98 88.12,293.99 88.37,294.00 88.62,294.02 88.87,294.03 89.12,294.04 89.37,294.05 89.62,294.06 89.87,294.07 90.12,294.08 90.37,294.08 90.62,294.09 90.87,294.10 91.12,294.10 91.37,294.11 91.62,294.11 91.87,294.12 92.12,294.12 92.37,294.13 92.62,294.13 92.87,294.14 93.12,294.14 93.37,294.14 93.62,294.15 93.87,294.15 94.12,294.16 94.37,294.16 94.62,294.16 94.87,294.16 95.12,294.17 95.37,294.17 95.62,294.17 95.87,294.17 96.12,294.18 96.37,294.18 96.62,294.18 96.87,294.18 97.12,294.18 97.37,294.19 97.62,294.19 97.87,294.19 98.12,294.19 98.37,294.19 98.62,294.19 98.87,294.19 99.12,294.20 99.37,294.20 99.62,294.20 99.87,294.20 100.12,294.20 100.37,294.20 100.62,294.20 100.87,294.20 101.12,294.21 101.37,294.21 101.62,294.21 101.87,294.21 102.12,294.21 102.37,294.21 102.62,294.21 102.87,294.21 103.12,294.21 103.37,294.21 103.62,294.21 103.87,294.21 104.12,294.22 104.37,294.22 104.62,294.22 104.87,294.22 105.12,294.22 105.37,294.22 105.62,294.22 105.87,294.22 106.12,294.22 106.37,294.22 106.62,294.22 106.87,294.22 107.12,294.22 107.37,294.22 107.62,294.22 107.87,294.22 108.12,294.22 108.37,294.22 108.62,294.23 108.87,294.23 109.12,294.23 109.37,294.23 109.62,294.23 109.87,294.23 110.12,294.23 110.37,294.23 110.62,294.23 110.87,294.23 111.12,294.23 111.37,294.23 111.62,294.23 111.87,294.23 112.12,294.23 112.37,294.23 112.62,294.23 112.87,294.23 113.12,294.23 113.37,294.23 113.62,294.23 113.87,294.23 114.12,294.23 114.37,294.23 114.62,294.23 114.87,294.23 115.12,294.23 115.37,294.23 115.62,294.23 115.87,294.23 116.12,294.23 116.37,294.23 116.62,294.23 116.87,294.23 117.12,294.24 117.37,294.24 117.62,294.24 117.87,294.24 118.12,294.24 118.37,294.24 118.62,294.24 118.87,294.24 119.12,294.24 119.37,294.24 119.62,294.24 119.87,294.24 120.12,294.24 120.37,294.24 120.62,294.24 120.87,294.24 121.12,294.24 121.37,294.24 121.62,294.24 121.87,294.24 122.12,294.24 122.37,294.24 122.62,294.24 122.87,294.24 123.12,294.24 123.37,294.24 123.62,294.24 123.87,294.24 124.12,294.24 124.37,294.24 124.62,294.24 124.87,294.24 125.12,294.24 125.37,294.24 125.62,294.24 125.87,294.24 126.12,294.24 126.37,294.24 126.62,294.24 126.87,294.24 127.12,294.24 127.37,294.24 127.62,294.24 127.87,294.24 128.12,294.24 128.37,294.24 128.62,294.24 128.87,294.24 129.12,294.24 129.37,294.24 129.62,294.24 129.87,294.24 130.12,294.24 130.37,294.24 130.62,294.24 130.87,294.24 131.12,294.24 131.37,294.24 131.62,294.24 131.87,294.24 132.12,294.24 132.37,294.24 132.62,294.24 132.87,294.24 133.12,294.24 133.37,294.24 133.62,294.24 133.87,294.24 134.12,294.24 134.37,294.24 134.62,294.24 134.87,294.24 135.12,294.24 135.37,294.24 135.62,294.24 135.87,294.24 136.12,294.24 136.37,294.24 136.62,294.24 136.87,294.24 137.12,294.24 137.37,294.24 137.62,294.24 137.87,294.24 138.12,294.24 138.37,294.24 138.62,294.24 138.87,294.24 139.12,294.24 139.37,294.24 139.62,294.24 139.87,294.24 140.12,294.24 140.37,294.24 140.62,294.24 140.87,294.24 141.12,294.24 141.37,294.24 141.62,294.24 141.87,294.24 142.12,294.24 142.37,294.24 142.62,294.24 142.87,294.24 143.12,294.24 143.37,294.24 143.62,294.24 143.87,294.24 144.12,294.24 144.37,294.24 144.62,294.24 144.87,294.24 145.12,294.25 145.37,294.25 145.62,294.25 145.87,294.25 146.12,294.25 146.37,294.25 146.62,294.25 146.87,294.25 147.12,294.25 147.37,294.25 147.62,294.25 147.87,294.25 148.12,294.25 148.37,294.25 148.62,294.25 148.87,294.25 149.12,294.25 149.37,294.25 149.62,294.25 149.87,294.25 150.12,294.25 150.37,294.25 150.62,294.25 150.87,294.25 151.12,294.25 151.37,294.25 151.62,294.25 151.87,294.25 152.12,294.25 152.37,294.25 152.62,294.25 152.87,294.25 153.12,294.25 153.37,294.25 153.62,294.25 153.87,294.25 154.12,294.25 154.37,294.25 154.62,294.25 154.87,294.25 155.12,294.25 155.37,294.25 155.62,294.25 155.87,294.25 156.12,294.25 156.37,294.25 156.62,294.25 156.87,294.25 157.12,294.25 157.37,294.25 157.62,294.25 157.87,294.25 158.12,294.25 158.37,294.25 158.62,294.25 158.87,294.25 159.12,294.25 159.37,294.25 159.62,294.25 159.87,294.25 160.12,294.25"/>
<path d="M36.5 139 V300 H155" fill="none" stroke="#3a3636" stroke-width="1.15"/>
<path d="M33.5 145 L36.5 137 L39.5 145 Z" fill="#2a2626"/>
<path d="M149 296.8 L157 300 L149 303.2 Z" fill="#2a2626"/>
<path d="M36.5 300 L76 236" fill="none" stroke="#1a1616" stroke-width="1.3"/>
<path d="M71.5 237.5 L78 233 L76.8 241 Z" fill="#1a1616"/>
<text x="41.5" y="144" font-family="Liberation Serif" font-size="16" fill="#111" letter-spacing="0">I</text>
<text x="160.5" y="305.5" font-family="Liberation Serif" font-size="18" fill="#111" letter-spacing="0">&#937;</text>
<text x="52.5" y="233" font-family="Liberation Serif" font-size="17" fill="#111" letter-spacing="0">k</text>
<text x="62.5" y="225.5" font-family="Liberation Serif" font-size="10" fill="#111" letter-spacing="0">-1</text>
<text x="97" y="165" font-family="Liberation Sans" font-style="italic" font-size="19" fill="#bcb8b6" letter-spacing="0">A</text>
<text x="110" y="169" font-family="Liberation Sans" font-size="11" fill="#bcb8b6" letter-spacing="0">1</text>
<text x="167" y="165" font-family="Liberation Sans" font-style="italic" font-size="19" fill="#bcb8b6" letter-spacing="0">A</text>
<text x="180" y="169" font-family="Liberation Sans" font-size="11" fill="#bcb8b6" letter-spacing="0">2</text>
<text x="136" y="151" font-family="Liberation Sans" font-style="italic" font-size="12.5" fill="#bcb8b6" letter-spacing="0">k</text>
<text x="142.5" y="154" font-family="Liberation Sans" font-size="7.5" fill="#bcb8b6" letter-spacing="0">1</text>
<text x="134.5" y="177" font-family="Liberation Sans" font-style="italic" font-size="12.5" fill="#bcb8b6" letter-spacing="0">k</text>
<text x="140.5" y="180" font-family="Liberation Sans" font-size="7.5" fill="#bcb8b6" letter-spacing="0">-1</text>
<path d="M122 155.8 H159" stroke="#bcb8b6" stroke-width="1.3"/><path d="M157 152.5 L164 155.8 L157 159 Z" fill="#bcb8b6"/>
<path d="M127 163.6 H163" stroke="#bcb8b6" stroke-width="1.3"/><path d="M128.5 160.3 L121.5 163.6 L128.5 167 Z" fill="#bcb8b6"/>
</svg>

<!-- right side widgets of main panel -->
<div class="fld" style="left:1150px;top:170px;width:126px;height:23px"></div>
<div class="fldw" style="left:1150px;top:194px;width:126px;height:22px"></div>
<div class="fldw" style="left:1150px;top:217px;width:126px;height:22px"></div>
<div class="fld" style="left:1150px;top:240px;width:126px;height:22px"></div>
<div class="fld" style="left:1150px;top:263px;width:126px;height:22px"></div>
<div class="btnbox" style="left:1284px;top:193px;width:100px;height:92px"></div>
<div class="btn" style="left:1287px;top:196px;width:94px;height:16px"></div>
<div class="btn" style="left:1287px;top:219px;width:94px;height:16px"></div>
<div class="btn" style="left:1287px;top:242px;width:94px;height:16px"></div>
<div class="btn" style="left:1287px;top:265px;width:94px;height:16px"></div>
<div class="t" style="left:1321px;top:197px">Change</div>
<div class="t" style="left:1321px;top:220px">Change</div>
<div class="t" style="left:1311px;top:243px;letter-spacing:0.75px">Spin editor</div>
<div class="t" style="left:1323px;top:266px;letter-spacing:0.85px">Cluster</div>

<div class="btnbox" style="left:1150px;top:305px;width:234px;height:36px"></div>
<div class="btn" style="left:1150px;top:308px;width:231px;height:30px"></div>
<div class="t" style="left:1244px;top:315px;letter-spacing:0.8px">Value setting</div>

<div class="a" style="left:1150px;top:371px;width:233px;height:109px;border:1px solid rgba(255,255,255,0.35);border-radius:5px;box-shadow:inset 1px 1px 0 rgba(0,0,0,0.06)"></div>
<div class="a" style="left:1150px;top:430px;width:224px;height:39px;border:1px solid #a9a3a0;border-radius:3px;background:#c6bdba"></div>
<div class="a" style="left:1151px;top:452px;width:222px;height:2px;background:#f3f2f1"></div>
<div class="a" style="left:1151px;top:454px;width:222px;height:14px;background:linear-gradient(90deg,#e8e8e8,#fff 60px)"></div>
<div class="t" style="left:1203px;top:436px">Spin-lock &#957;1 (Hz)</div>

<div class="fld" style="left:1150px;top:492px;width:126px;height:20px"></div>
<div class="fld" style="left:1150px;top:514px;width:126px;height:21px"></div>
<div class="fldw" style="left:1150px;top:537px;width:126px;height:21px"></div>
<div class="fldw" style="left:1150px;top:560px;width:126px;height:21px"></div>
<div class="fld" style="left:1150px;top:583px;width:126px;height:21px"></div>
<div class="fldw" style="left:1150px;top:606px;width:126px;height:21px"></div>
<div class="btnbox" style="left:1284px;top:490px;width:100px;height:46px"></div>
<div class="btn" style="left:1287px;top:493px;width:94px;height:17px"></div>
<div class="btn" style="left:1287px;top:516px;width:94px;height:17px"></div>
<div class="t" style="left:1323px;top:494px">Modify</div>
<div class="t" style="left:1326px;top:517px">Toggle</div>
<div class="btnbox" style="left:1284px;top:582px;width:100px;height:23px"></div>
<div class="btn" style="left:1287px;top:585px;width:94px;height:17px"></div>
<div class="t" style="left:1326px;top:586px">Toggle</div>

<!-- Status bar -->
<div class="a sb" style="left:4px;width:794px"></div>
<div class="a sb" style="left:800px;width:197px"></div>
<div class="a sb" style="left:999px;width:397px"></div>
<div class="t" style="left:7px;top:1026px;letter-spacing:0.82px">(C) 2001-2014 the relax development team</div>
<div class="t" style="left:804px;top:1026px;letter-spacing:0.64px">Current data pipe:</div>
<div class="t" style="left:1003px;top:1026px;letter-spacing:0.56px">origin - relax_disp (Mon Feb 17 18:00:16 2014)</div>

<!-- Execute -->
<div class="btnbox" style="left:1243px;top:963px;width:141px;height:44px"></div>
<div class="btn" style="left:1246px;top:966px;width:134px;height:37px"></div>
<div class="t" style="left:1326px;top:977px">Execute</div>
<div id="exec-icon"></div>
<svg class="a" style="left:0;top:0;pointer-events:none" width="1400" height="1050" viewBox="0 0 1400 1050">
<defs>
<linearGradient id="fldg" x1="0" y1="0" x2="0" y2="1"><stop offset="0" stop-color="#a8c8f4"/><stop offset="1" stop-color="#5a90e0"/></linearGradient>
<radialGradient id="ballg" cx="0.35" cy="0.3" r="0.8"><stop offset="0" stop-color="#7a90ff"/><stop offset="0.3" stop-color="#1a2ab0"/><stop offset="1" stop-color="#000a60"/></radialGradient>
<linearGradient id="butg" x1="0" y1="0" x2="1" y2="0"><stop offset="0" stop-color="#0a1418"/><stop offset="0.35" stop-color="#1aa8c8"/><stop offset="0.5" stop-color="#0a1418"/><stop offset="0.65" stop-color="#1aa8c8"/><stop offset="1" stop-color="#0a1418"/></linearGradient>
</defs>
<!-- Change folders -->
<g id="fold1">
<path d="M1299 198.5 H1304 L1305.5 200 H1314.5 V204 H1299 Z" fill="#8ab4ee" stroke="#4a80d0" stroke-width="0.6"/>
<rect x="1299" y="203" width="16" height="8" rx="1" fill="url(#fldg)" stroke="#4a80d0" stroke-width="0.6"/>
</g>
<use href="#fold1" y="23"/>
<!-- spin editor ball -->
<circle cx="1297.5" cy="250" r="4.3" fill="url(#ballg)"/>
<path d="M1294 256 L1301.5 243.5" stroke="#1e3a6a" stroke-width="0.8"/>
<ellipse cx="1297.5" cy="250.5" rx="7" ry="2" transform="rotate(25 1297.5 250.5)" fill="none" stroke="#60d0e0" stroke-width="0.5"/>
<!-- cluster balls -->
<circle cx="1309" cy="270" r="2.8" fill="url(#ballg)"/>
<circle cx="1306" cy="275" r="2.8" fill="url(#ballg)"/>
<circle cx="1312" cy="275" r="2.8" fill="url(#ballg)"/>
<!-- Angstrom -->
<text x="1218.5" y="334.5" font-family="Liberation Serif" font-size="24" fill="#111" letter-spacing="0">&#197;</text>
<!-- Modify flag -->
<path d="M1307.5 494 V510" stroke="#222" stroke-width="1"/>
<path d="M1308 495 Q1312 497 1318 495 L1315 499 L1318 503 Q1312 505 1308 503 Z" fill="#2a5aa8"/>
<!-- Toggle radios -->
<circle cx="1311.5" cy="524.5" r="6.3" fill="#f6f6f6" stroke="#444" stroke-width="1.3"/>
<circle cx="1311.5" cy="524.5" r="2.6" fill="#e01010"/>
<circle cx="1311.5" cy="593.5" r="6.3" fill="#f6f6f6" stroke="#444" stroke-width="1.3"/>
<circle cx="1311.5" cy="593.5" r="2.6" fill="#e01010"/>
<!-- spinbox arrows on main panel -->
<path d="M1264 546 L1267 543 L1270 546 M1264 550 L1267 553 L1270 550" fill="none" stroke="#222" stroke-width="1.1"/>
<path d="M1264 569 L1267 566 L1270 569 M1264 573 L1267 576 L1270 573" fill="none" stroke="#222" stroke-width="1.1"/>
<!-- Execute butterfly -->
<g transform="translate(1250,970)">
<defs><radialGradient id="tealg" cx="0.6" cy="0.7" r="0.7"><stop offset="0" stop-color="#30c8e0"/><stop offset="0.6" stop-color="#1a8aa8"/><stop offset="1" stop-color="#0c2a34"/></radialGradient></defs>
<path d="M35 6 C33 2 30 1 27 2 C24 3 22 6 21 10 C15 13 6 18 1 23 C3 26 10 27 18 26 C26 25 32 24 35 23 Z" fill="#101414"/><path d="M 36 6 C 38 2 41 1 44 2 C 47 3 49 6 50 10 C 56 13 65 18 70 23 C 68 26 61 27 53 26 C 45 25 39 24 36 23 Z" fill="#101414"/>
<path d="M34 9 C29 10 25 12 22 14 C18 16 14 19 12 22 C18 23 26 22 34 20 Z" fill="url(#tealg)" opacity="0.9"/><path d="M 37 9 C 42 10 46 12 49 14 C 53 16 57 19 59 22 C 53 23 45 22 37 20 Z" fill="url(#tealg)" opacity="0.9"/>
<path d="M27 3 L26.5 -0.5 M44 3 L44.5 -0.5" stroke="#101414" stroke-width="1.6"/>
<path d="M33 24 L31 29 M38 24 L41 28" stroke="#888" stroke-width="0.5"/>
</g>
</svg>
<!-- Wizard (dimmed) -->
<div class="a" id="wiz"></div>
<div class="a" style="left:258.5px;top:134.5px;width:10.300000000000011px;height:1.2px;background:#111"></div><div class="a" style="left:285.8px;top:134.5px;width:4.199999999999989px;height:1.2px;background:#111"></div><div class="a" style="left:333.5px;top:134.5px;width:1.5px;height:1.2px;background:#111"></div><div class="a" style="left:341px;top:134.5px;width:2px;height:1.2px;background:#111"></div><div class="a" style="left:387px;top:134.5px;width:4px;height:1.2px;background:#111"></div><div class="a" style="left:394.5px;top:134.5px;width:2.0px;height:1.2px;background:#111"></div><div class="a" style="left:459px;top:134.5px;width:2px;height:1.2px;background:#111"></div><div class="a" style="left:538px;top:134.5px;width:4px;height:1.2px;background:#111"></div><div class="a" style="left:570px;top:134.5px;width:2px;height:1.2px;background:#111"></div>
<svg class="a" style="left:204px;top:141px" width="20" height="10" viewBox="0 0 20 10"><path d="M1 8 C3 4 6 2 8 2 L10 5 L12 2 C14 2 17 4 19 8 L14 7 L10 9 L6 7 Z" fill="#2a2a2a"/></svg>
<svg class="a" style="left:224.5px;top:136.5px" width="20" height="20" viewBox="0 0 20 20"><defs><linearGradient id="wb234_146" x1="0" y1="0" x2="0" y2="1"><stop offset="0" stop-color="#8e8e8e"/><stop offset="1" stop-color="#7a7a7a"/></linearGradient></defs><circle cx="10" cy="10.9" r="7.5" fill="#000" opacity="0.22"/><circle cx="10" cy="10" r="7" fill="url(#wb234_146)" stroke="#5e5e5e" stroke-width="1"/><circle cx="10" cy="10" r="0.9" fill="#474747"/></svg>
<svg class="a" style="left:1154.5px;top:136.5px" width="20" height="20" viewBox="0 0 20 20"><defs><linearGradient id="wb1164_146" x1="0" y1="0" x2="0" y2="1"><stop offset="0" stop-color="#8e8e8e"/><stop offset="1" stop-color="#7a7a7a"/></linearGradient></defs><circle cx="10" cy="10.9" r="7.5" fill="#000" opacity="0.22"/><circle cx="10" cy="10" r="7" fill="url(#wb1164_146)" stroke="#5e5e5e" stroke-width="1"/><path d="M6.8 8.7 L10 11.8 L13.2 8.7" fill="none" stroke="#474747" stroke-width="1.3"/></svg>
<svg class="a" style="left:1177.5px;top:136.5px" width="20" height="20" viewBox="0 0 20 20"><defs><linearGradient id="wb1187_146" x1="0" y1="0" x2="0" y2="1"><stop offset="0" stop-color="#8e8e8e"/><stop offset="1" stop-color="#7a7a7a"/></linearGradient></defs><circle cx="10" cy="10.9" r="7.5" fill="#000" opacity="0.22"/><circle cx="10" cy="10" r="7" fill="url(#wb1187_146)" stroke="#5e5e5e" stroke-width="1"/><path d="M6.9 6.9 L13.1 13.1 M13.1 6.9 L6.9 13.1" fill="none" stroke="#474747" stroke-width="1.2"/></svg>
<div class="t" style="left:0;top:139px;width:1400px;text-align:center;font-weight:bold;color:#555;letter-spacing:1.14px">Peak intensity loading wizard</div>

<!-- spectrum image -->
<svg class="a" style="left:205px;top:165px" width="210" height="285" viewBox="205 165 210 285">
<rect x="210" y="169" width="200" height="277" fill="#8a8a8a"/>
<rect x="210" y="169" width="200" height="6" fill="#2c2f3a"/>
<text x="288" y="174" font-family="Liberation Sans" font-size="5" fill="#9a9aa0" letter-spacing="0">u_spc2 - selected</text>
<text x="396" y="174" font-family="Liberation Sans" font-size="5" fill="#aaa" letter-spacing="0.5">- &#9633; x</text>
<rect x="211" y="175.5" width="175.5" height="252" fill="#000"/>
<rect x="386.5" y="175.5" width="13" height="252" fill="#8c8c8c"/>
<rect x="399.5" y="175.5" width="10" height="270" fill="#7a7a7a"/>
<path d="M324.5 175.5 V299.5 M211 299.5 H386.5" stroke="#8a8a8a" stroke-width="0.8"/>
<rect x="211" y="427.5" width="188" height="11.5" fill="#8c8c8c"/>
<rect x="211" y="439.5" width="188" height="6" fill="#9a9a9a" stroke="#777" stroke-width="0.5"/>
<rect x="260" y="440" width="18" height="4.5" fill="#aaa" stroke="#777" stroke-width="0.5"/>
<text x="212" y="436" font-family="Liberation Mono" font-size="5" fill="#333" letter-spacing="0">%</text>
<text x="233" y="436" font-family="Liberation Mono" font-size="5" fill="#333" letter-spacing="0">99</text>
<text x="253" y="436" font-family="Liberation Mono" font-size="5" fill="#333" letter-spacing="0">96</text>
<text x="274" y="436" font-family="Liberation Mono" font-size="5" fill="#333" letter-spacing="0">97</text>
<text x="294" y="436" font-family="Liberation Mono" font-size="5" fill="#333" letter-spacing="0">98</text>
<text x="390" y="186" font-family="Liberation Mono" font-size="5" fill="#444" letter-spacing="0">1145</text>
<text x="390" y="207" font-family="Liberation Mono" font-size="5" fill="#444" letter-spacing="0">1150</text>
<ellipse cx="300.2" cy="212.3" rx="8.50" ry="9.18" fill="none" stroke="#2e8a3a" stroke-width="0.7" opacity="0.90"/><ellipse cx="300.2" cy="212.3" rx="7.05" ry="7.62" fill="none" stroke="#2e8a3a" stroke-width="0.7" opacity="0.80"/><ellipse cx="300.2" cy="212.3" rx="5.61" ry="6.06" fill="none" stroke="#2e8a3a" stroke-width="0.7" opacity="0.70"/><ellipse cx="300.2" cy="212.3" rx="4.17" ry="4.50" fill="none" stroke="#2e8a3a" stroke-width="0.7" opacity="0.60"/><ellipse cx="300.2" cy="212.3" rx="2.72" ry="2.94" fill="none" stroke="#2e8a3a" stroke-width="0.7" opacity="0.50"/><path d="M295.9 208.1 L304.4 216.6 M304.4 208.1 L295.9 216.6" stroke="#7aa080" stroke-width="0.5"/>
<ellipse cx="271.0" cy="281.4" rx="8.00" ry="8.64" fill="none" stroke="#2e8a3a" stroke-width="0.7" opacity="0.90"/><ellipse cx="271.0" cy="281.4" rx="6.64" ry="7.17" fill="none" stroke="#2e8a3a" stroke-width="0.7" opacity="0.80"/><ellipse cx="271.0" cy="281.4" rx="5.28" ry="5.70" fill="none" stroke="#2e8a3a" stroke-width="0.7" opacity="0.70"/><ellipse cx="271.0" cy="281.4" rx="3.92" ry="4.23" fill="none" stroke="#2e8a3a" stroke-width="0.7" opacity="0.60"/><ellipse cx="271.0" cy="281.4" rx="2.56" ry="2.76" fill="none" stroke="#2e8a3a" stroke-width="0.7" opacity="0.50"/><path d="M267.0 277.4 L275.0 285.4 M275.0 277.4 L267.0 285.4" stroke="#7aa080" stroke-width="0.5"/>
<ellipse cx="220.6" cy="365.0" rx="8.80" ry="9.50" fill="none" stroke="#2e8a3a" stroke-width="0.7" opacity="0.90"/><ellipse cx="220.6" cy="365.0" rx="7.30" ry="7.89" fill="none" stroke="#2e8a3a" stroke-width="0.7" opacity="0.80"/><ellipse cx="220.6" cy="365.0" rx="5.81" ry="6.27" fill="none" stroke="#2e8a3a" stroke-width="0.7" opacity="0.70"/><ellipse cx="220.6" cy="365.0" rx="4.31" ry="4.66" fill="none" stroke="#2e8a3a" stroke-width="0.7" opacity="0.60"/><ellipse cx="220.6" cy="365.0" rx="2.82" ry="3.04" fill="none" stroke="#2e8a3a" stroke-width="0.7" opacity="0.50"/><path d="M216.2 360.6 L225.0 369.4 M225.0 360.6 L216.2 369.4" stroke="#7aa080" stroke-width="0.5"/>
<path d="M300.2 196 V205 M269.7 263 V272 M236 346 L226.5 358" stroke="#c8c8c8" stroke-width="1.2"/>
<text x="280.5" y="193" font-family="Liberation Mono" font-size="7.2" fill="#9c9c9c" letter-spacing="-0.1">GLN41N-HN</text>
<text x="344.5" y="208.5" font-family="Liberation Mono" font-size="7.2" fill="#9c9c9c" letter-spacing="-0.1">SER135N-HN</text>
<text x="249.5" y="258.5" font-family="Liberation Mono" font-size="7.2" fill="#9c9c9c" letter-spacing="-0.1">LLY28N-HN</text>
<text x="229.5" y="342.5" font-family="Liberation Mono" font-size="7.2" fill="#9c9c9c" letter-spacing="-0.1">VAL137N-HN</text>
<text x="277" y="376" font-family="Liberation Mono" font-size="7.2" fill="#9c9c9c" letter-spacing="-0.1">TRPT5N</text>
</svg>

<div class="t" style="left:686px;top:181px;font-size:22px;line-height:24px;letter-spacing:1.0px;color:#1a1a1a">Peak intensity reading.</div>
<div class="a" style="left:1104px;top:220px;width:90px;height:1px;background:rgba(255,255,255,0.12)"></div>

<!-- scrollbar -->
<div class="a" style="left:1175px;top:239px;width:13px;height:262px;border-radius:6px;background:#686868;border:1.5px solid #505050"></div>
<div class="a" style="left:1176.5px;top:240.5px;width:10px;height:75px;border-radius:5px;background:linear-gradient(90deg,#7a7a7a,#8a8a8a);border:1.2px solid #4e4e4e"></div>
<div class="a" style="left:1104px;top:532px;width:88px;height:1px;background:rgba(255,255,255,0.1)"></div>

<div class="t" style="left:1106px;top:369px;color:#262626">that of a</div>
<div class="t" style="left:1107px;top:414px;color:#262626">the first</div>
<div class="t" style="left:1104px;top:459px;color:#262626">his should</div>
<div class="t" style="left:1108px;top:474px;color:#262626;letter-spacing:0.75px">volume</div>
<div class="t" style="left:1104px;top:489px;color:#262626">eak</div>
<div class="t" style="left:1103px;top:504px;color:#262626">e fitting,</div>

<!-- wizard fields -->
<div class="wfld" style="left:1060px;top:553px;width:95px;height:26px"></div>
<div class="t" style="left:1105px;top:558px;color:#1a1a1a;letter-spacing:0.3px">ta/dispe</div>
<div class="wbtn" style="left:1166px;top:556px;width:21px;height:21px"></div>
<div class="wfld" style="left:1060px;top:591px;width:95px;height:26px"></div>
<div class="wbtn" style="left:1166px;top:594px;width:21px;height:21px"></div>
<div class="wfld" style="left:1060px;top:630px;width:127px;height:26px"></div>
<div class="wfld" style="left:1060px;top:668px;width:127px;height:24px"></div>
<div class="wfld" style="left:1060px;top:706px;width:95px;height:25px"></div>
<div class="wbtn" style="left:1166px;top:708px;width:21px;height:21px"></div>
<div class="wfld" style="left:1060px;top:744px;width:127px;height:25px"></div>
<div class="wfld" style="left:1060px;top:783px;width:127px;height:26px"></div>
<div class="wfld" style="left:815px;top:823px;width:340px;height:26px"></div>
<div class="t" style="left:1104px;top:829px;color:#202020">ce'</div>
<div class="wbtn" style="left:1166px;top:826px;width:21px;height:21px"></div>

<!-- wizard buttons -->
<div class="wbtnbox" style="left:660px;top:866px;width:100px;height:33px"></div>
<div class="wbtnbox" style="left:765px;top:866px;width:100px;height:33px"></div>
<div class="wbtnbox" style="left:870px;top:866px;width:100px;height:33px"></div>
<div class="wbtnbox" style="left:975px;top:866px;width:100px;height:33px"></div>
<div class="wbtnbox" style="left:1090px;top:866px;width:100px;height:33px"></div>
<div class="wbtn" style="left:662px;top:869px;width:94px;height:27px"></div>
<div class="wbtn" style="left:768px;top:869px;width:94px;height:27px"></div>
<div class="wbtn" style="left:873px;top:869px;width:94px;height:27px"></div>
<div class="wbtn" style="left:978px;top:869px;width:94px;height:27px"></div>
<div class="wbtn" style="left:1093px;top:869px;width:94px;height:27px"></div>
<div class="t" style="left:708px;top:875px;color:#202020;letter-spacing:0.85px">Back</div>
<div class="t" style="left:813px;top:875px;color:#202020">Apply</div>
<div class="t" style="left:920px;top:875px;color:#202020">Skip</div>
<div class="t" style="left:1024px;top:875px;color:#202020;letter-spacing:0.85px">Next</div>
<div class="t" style="left:1134px;top:875px;color:#202020">Cancel</div>
<svg class="a" style="left:0;top:0;pointer-events:none" width="1400" height="1050" viewBox="0 0 1400 1050">
<defs>
<linearGradient id="trg" x1="0" y1="0" x2="0" y2="1"><stop offset="0" stop-color="#7a8290"/><stop offset="0.5" stop-color="#3c4555"/><stop offset="1" stop-color="#7a8290"/></linearGradient>
<linearGradient id="skg" x1="0" y1="0" x2="0" y2="1"><stop offset="0" stop-color="#4a5a78"/><stop offset="0.6" stop-color="#1a3060"/><stop offset="1" stop-color="#304a78"/></linearGradient>
<linearGradient id="apg" x1="0" y1="0" x2="0" y2="1"><stop offset="0" stop-color="#80a878"/><stop offset="1" stop-color="#4e7a48"/></linearGradient>
</defs>
<!-- Back -->
<path d="M685.5 882 L699 872.5 V891.5 Z" fill="url(#trg)" stroke="#1e2430" stroke-width="1"/>
<!-- Apply -->
<path d="M786.5 881 L789.8 877.8 L793.5 881.5 L800.8 874.2 L804 877.4 L793.5 888 Z" fill="url(#apg)" stroke="#34502e" stroke-width="0.9"/>
<!-- Skip -->
<path d="M895 872.5 L904.5 881.5 V872.5 L913.5 882 L904.5 891.5 V882.5 L895 891.5 Z" fill="url(#skg)" stroke="#142040" stroke-width="0.9"/>
<!-- Next -->
<path d="M1014.5 882 L1001 872.5 V891.5 Z" fill="url(#trg)" stroke="#1e2430" stroke-width="1"/>
<!-- Cancel -->
<circle cx="1116" cy="882" r="8.5" fill="none" stroke="#6a1a1a" stroke-width="3.2"/>
<path d="M1110 888 L1122 876" stroke="#6a1a1a" stroke-width="3.4"/>
<!-- scrollbar arrows -->
<path d="M1178.5 234 L1181.5 231 L1184.5 234" fill="none" stroke="#3a3a3a" stroke-width="1.1"/>
<path d="M1178.5 509 L1181.5 506 L1184.5 509" fill="none" stroke="#8a8a8a" stroke-width="1.1"/>
<path d="M1178.5 518 L1181.5 521 L1184.5 518" fill="none" stroke="#1e1e1e" stroke-width="1.3"/>
<!-- spin arrows / combo -->
<path d="M1175 640 L1178 637 L1181 640" fill="none" stroke="#1a1a1a" stroke-width="1.3"/>
<path d="M1175 646 L1178 649 L1181 646" fill="none" stroke="#8a8a8a" stroke-width="1.1"/>
<path d="M1174 679 L1177.5 682.5 L1181 679" fill="none" stroke="#1a1a1a" stroke-width="1.4"/>
<!-- field buttons icons -->
<path d="M1169.5 560 H1179 L1183 564 V574 H1169.5 Z" fill="#3a4a60"/>
<path d="M1171 559.5 H1177.5 L1182 564 V568 H1171 Z" fill="#c4c4c4" stroke="#666" stroke-width="0.5"/>
<rect x="1169.5" y="567.5" width="13.5" height="6.5" fill="#5a6678" stroke="#333d4a" stroke-width="0.5"/>
<path d="M1169.5 571 H1183" stroke="#3a4658" stroke-width="0.6"/>
<rect x="1169.5" y="601" width="12" height="7" rx="1" fill="none" stroke="#4a4a4a" stroke-width="0.8"/><path d="M1172.5 602.5 V606.5 M1171.8 602.5 H1173.2 M1171.8 606.5 H1173.2" stroke="#333" stroke-width="0.5"/>
<rect x="1169.5" y="714.5" width="12" height="7" rx="1" fill="none" stroke="#4a4a4a" stroke-width="0.8"/>
<path d="M1170.7 829.7 H1183 V841 L1180 844.7 H1170.7 Z" fill="#a4a4a4" stroke="#5a5a5a" stroke-width="0.7"/>
<path d="M1180 844.7 L1180.5 841.5 L1183 841" fill="#d0d0d0" stroke="#6a6a6a" stroke-width="0.5"/>
<path d="M1169.8 844.3 L1171 841.2 L1177.6 834.2 L1179.4 836 L1172.6 843 Z" fill="#8a8260" stroke="#111" stroke-width="0.8"/>
</svg>
<!-- Edit dialog -->
<div class="a" id="dlg"></div>
<svg class="a" style="left:305px;top:222px" width="20" height="10" viewBox="0 0 20 10"><path d="M1 8 C3 4 6 2 8 2 L10 5 L12 2 C14 2 17 4 19 8 L14 7 L10 9 L6 7 Z" fill="#1d2a30"/><path d="M5 6 L8 4 L9.5 7Z M15 6 L12 4 L10.5 7Z" fill="#2a9fb8"/></svg>
<svg class="a" style="left:326.5px;top:217.5px" width="20" height="20" viewBox="0 0 20 20"><defs><linearGradient id="wb336_227" x1="0" y1="0" x2="0" y2="1"><stop offset="0" stop-color="#fafafa"/><stop offset="1" stop-color="#d2d0ce"/></linearGradient></defs><circle cx="10" cy="10.9" r="7.5" fill="#000" opacity="0.22"/><circle cx="10" cy="10" r="7" fill="url(#wb336_227)" stroke="#a9a6a4" stroke-width="1"/><circle cx="10" cy="10" r="0.9" fill="#6e6c6a"/></svg>
<svg class="a" style="left:1056.5px;top:217.5px" width="20" height="20" viewBox="0 0 20 20"><defs><linearGradient id="wb1066_227" x1="0" y1="0" x2="0" y2="1"><stop offset="0" stop-color="#fafafa"/><stop offset="1" stop-color="#d2d0ce"/></linearGradient></defs><circle cx="10" cy="10.9" r="7.5" fill="#000" opacity="0.22"/><circle cx="10" cy="10" r="7" fill="url(#wb1066_227)" stroke="#a9a6a4" stroke-width="1"/><path d="M6.8 8.7 L10 11.8 L13.2 8.7" fill="none" stroke="#262626" stroke-width="1.6"/></svg>
<svg class="a" style="left:1079.5px;top:217.5px" width="20" height="20" viewBox="0 0 20 20"><defs><linearGradient id="wb1089_227" x1="0" y1="0" x2="0" y2="1"><stop offset="0" stop-color="#fafafa"/><stop offset="1" stop-color="#d2d0ce"/></linearGradient></defs><circle cx="10" cy="10.9" r="7.5" fill="#000" opacity="0.22"/><circle cx="10" cy="10" r="7" fill="url(#wb1089_227)" stroke="#a9a6a4" stroke-width="1"/><path d="M6.9 6.9 L13.1 13.1 M13.1 6.9 L6.9 13.1" fill="none" stroke="#262626" stroke-width="1.35"/></svg>
<div class="t" style="left:2px;top:219px;width:1400px;text-align:center;font-weight:bold;color:#1e1b1a;letter-spacing:0.86px">Edit the spectrum_id values.</div>

<!-- table -->
<div class="a" style="left:312px;top:250px;width:780px;height:536px;border:1px solid #a29c99;border-top-color:#8e8884;border-radius:4px 4px 0 0;background:#fff"></div>
<div class="a" style="left:313px;top:251px;width:778px;height:22px;background:linear-gradient(180deg,#e8e6e4,#dfdcda);border-radius:3px 3px 0 0"></div>
<div class="a" style="left:313px;top:273px;width:778px;height:1px;background:#a9a4a1"></div>
<div class="a" style="left:313px;top:274px;width:778px;height:1px;background:#f0eeed"></div>
<div class="a" style="left:382px;top:275px;width:1px;height:361px;background:#dcdcdc"></div>
<div class="t" style="left:320px;top:256px">Position</div>
<div class="t" style="left:390px;top:256px">Spectrum_id</div>
<div class="t cell" style="left:317px;top:276px">1</div><div class="t cell" style="left:386px;top:276px">500_reference</div>
<div class="a" style="left:313px;top:294px;width:777px;height:1px;background:#dcdcdc"></div>
<div class="t cell" style="left:317px;top:295px">2</div><div class="t cell" style="left:386px;top:295px">500_133.33</div>
<div class="a" style="left:313px;top:313px;width:777px;height:1px;background:#dcdcdc"></div>
<div class="t cell" style="left:317px;top:314px">3</div><div class="t cell" style="left:386px;top:314px">500_133.33b</div>
<div class="a" style="left:313px;top:332px;width:777px;height:1px;background:#dcdcdc"></div>
<div class="t cell" style="left:317px;top:333px">4</div><div class="t cell" style="left:386px;top:333px">500_200</div>
<div class="a" style="left:313px;top:351px;width:777px;height:1px;background:#dcdcdc"></div>
<div class="t cell" style="left:317px;top:352px">5</div><div class="t cell" style="left:386px;top:352px">500_266.67</div>
<div class="a" style="left:313px;top:370px;width:777px;height:1px;background:#dcdcdc"></div>
<div class="t cell" style="left:317px;top:371px">6</div><div class="t cell" style="left:386px;top:371px">500_333.33</div>
<div class="a" style="left:313px;top:389px;width:777px;height:1px;background:#dcdcdc"></div>
<div class="t cell" style="left:317px;top:390px">7</div><div class="t cell" style="left:386px;top:390px">500_400</div>
<div class="a" style="left:313px;top:408px;width:777px;height:1px;background:#dcdcdc"></div>
<div class="t cell" style="left:317px;top:409px">8</div><div class="t cell" style="left:386px;top:409px">500_466.67</div>
<div class="a" style="left:313px;top:427px;width:777px;height:1px;background:#dcdcdc"></div>
<div class="t cell" style="left:317px;top:428px">9</div><div class="t cell" style="left:386px;top:428px">500_533.33</div>
<div class="a" style="left:313px;top:446px;width:777px;height:1px;background:#dcdcdc"></div>
<div class="t cell" style="left:317px;top:447px">10</div><div class="t cell" style="left:386px;top:447px">500_533.33b</div>
<div class="a" style="left:313px;top:465px;width:777px;height:1px;background:#dcdcdc"></div>
<div class="t cell" style="left:317px;top:466px">11</div><div class="t cell" style="left:386px;top:466px">500_600</div>
<div class="a" style="left:313px;top:484px;width:777px;height:1px;background:#dcdcdc"></div>
<div class="t cell" style="left:317px;top:485px">12</div><div class="t cell" style="left:386px;top:485px">500_66.667</div>
<div class="a" style="left:313px;top:503px;width:777px;height:1px;background:#dcdcdc"></div>
<div class="t cell" style="left:317px;top:504px">13</div><div class="t cell" style="left:386px;top:504px">500_666.67</div>
<div class="a" style="left:313px;top:522px;width:777px;height:1px;background:#dcdcdc"></div>
<div class="t cell" style="left:317px;top:523px">14</div><div class="t cell" style="left:386px;top:523px">500_733.33</div>
<div class="a" style="left:313px;top:541px;width:777px;height:1px;background:#dcdcdc"></div>
<div class="t cell" style="left:317px;top:542px">15</div><div class="t cell" style="left:386px;top:542px">500_800</div>
<div class="a" style="left:313px;top:560px;width:777px;height:1px;background:#dcdcdc"></div>
<div class="t cell" style="left:317px;top:561px">16</div><div class="t cell" style="left:386px;top:561px">500_866.67</div>
<div class="a" style="left:313px;top:579px;width:777px;height:1px;background:#dcdcdc"></div>
<div class="t cell" style="left:317px;top:580px">17</div><div class="t cell" style="left:386px;top:580px">500_933.33</div>
<div class="a" style="left:313px;top:598px;width:777px;height:1px;background:#dcdcdc"></div>
<div class="t cell" style="left:317px;top:599px">18</div><div class="t cell" style="left:386px;top:599px">500_933.33b</div>
<div class="a" style="left:313px;top:617px;width:777px;height:1px;background:#dcdcdc"></div>
<div class="t cell" style="left:317px;top:618px">19</div><div class="t cell" style="left:386px;top:618px">500_1000</div>
<div class="a" style="left:313px;top:636px;width:777px;height:1px;background:#dcdcdc"></div>

<!-- dialog buttons -->
<div class="btnbox" style="left:372px;top:797px;width:150px;height:33px"></div>
<div class="btnbox" style="left:542px;top:797px;width:150px;height:33px"></div>
<div class="btnbox" style="left:712px;top:797px;width:150px;height:33px"></div>
<div class="btnbox" style="left:882px;top:797px;width:150px;height:33px"></div>
<div class="btn" style="left:375px;top:800px;width:144px;height:27px"></div>
<div class="btn" style="left:545px;top:800px;width:144px;height:27px"></div>
<div class="btn" style="left:715px;top:800px;width:144px;height:27px;border-color:#9fb8c8;border-bottom-color:#7f9aaa"></div>
<div class="btn" style="left:885px;top:800px;width:144px;height:27px"></div>
<div class="t" style="left:451px;top:806px;letter-spacing:1.2px">Add</div>
<div class="t" style="left:612px;top:806px;letter-spacing:1.1px">Delete</div>
<div class="t" style="left:773px;top:806px;letter-spacing:0.95px">Delete all</div>
<div class="t" style="left:964px;top:806px;letter-spacing:1.5px">Ok</div>
<svg class="a" style="left:0;top:0;pointer-events:none" width="1400" height="1050" viewBox="0 0 1400 1050">
<defs>
<linearGradient id="plusg" x1="0" y1="0" x2="0" y2="1"><stop offset="0" stop-color="#9fd0f5"/><stop offset="0.5" stop-color="#3d88d8"/><stop offset="1" stop-color="#0d4aa8"/></linearGradient>
<linearGradient id="minusg" x1="0" y1="0" x2="0" y2="1"><stop offset="0" stop-color="#f07070"/><stop offset="1" stop-color="#c80808"/></linearGradient>
<linearGradient id="xg" x1="0" y1="0" x2="0" y2="1"><stop offset="0" stop-color="#f3a0a0"/><stop offset="0.55" stop-color="#e81818"/><stop offset="1" stop-color="#c00000"/></linearGradient>
<linearGradient id="okg" x1="0" y1="0" x2="0" y2="1"><stop offset="0" stop-color="#5a82b8"/><stop offset="1" stop-color="#8aaad8"/></linearGradient>
</defs>
<!-- Add plus -->
<path d="M427 802.5 Q427 801.8 428 801.8 H432 Q433 801.8 433 802.5 V810 H440.5 Q441.2 810 441.2 811 V815 Q441.2 816 440.5 816 H433 V823.2 Q433 824 432 824 H428 Q427 824 427 823.2 V816 H419.5 Q418.8 816 418.8 815 V811 Q418.8 810 419.5 810 H427 Z" fill="url(#plusg)" stroke="#0a4098" stroke-width="0.9"/>
<path d="M430 803.5 V822 M420.5 813 H439.5" stroke="#b8e0ff" stroke-width="1" opacity="0.6"/>
<!-- Delete minus -->
<rect x="582" y="809.8" width="20" height="6.2" rx="3" fill="url(#minusg)" stroke="#b80000" stroke-width="0.8"/>
<!-- Delete all X -->
<path d="M743 806.2 L746.2 803 L753 809.8 L759.8 803 L763 806.2 L756.2 813 L763 819.8 L759.8 823 L753 816.2 L746.2 823 L743 819.8 L749.8 813 Z" fill="url(#xg)" stroke="#c01010" stroke-width="0.8"/>
<!-- Ok check -->
<path d="M935.5 812.2 L938.7 809 L942.2 812.5 L949.5 805.3 L952.7 808.5 L942.2 819 Z" fill="url(#okg)" stroke="#2c4c78" stroke-width="1"/>
<!-- table header dotted separators -->
<path d="M383.5 260.5 V267.5" stroke="#8a8684" stroke-width="1" stroke-dasharray="1 2"/>
<path d="M1088.5 260.5 V267.5" stroke="#8a8684" stroke-width="1" stroke-dasharray="1 2"/>
<!-- cursor -->
<path d="M998.5 815 L998.5 831.5 L1002.3 827.8 L1005.4 834 L1008 832.6 L1005 826.6 L1010.2 826.6 Z" fill="#1d1f4a" stroke="#fff" stroke-width="1"/>
</svg>

</body></html>
